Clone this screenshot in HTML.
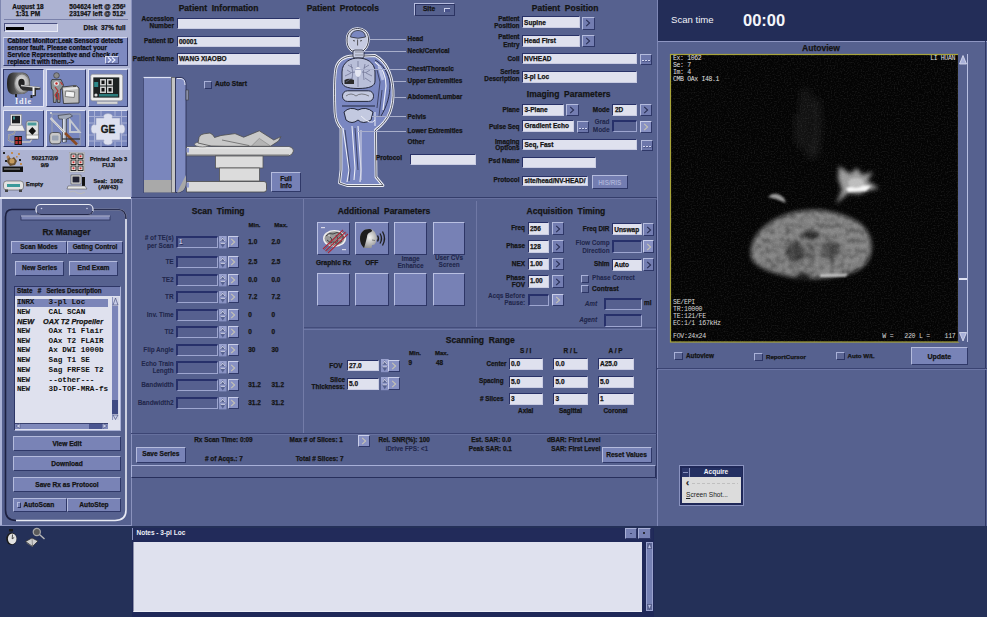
<!DOCTYPE html>
<html><head><meta charset="utf-8">
<style>
*{margin:0;padding:0;box-sizing:border-box}
html,body{width:987px;height:617px;overflow:hidden;background:#243058;font-family:"Liberation Sans",sans-serif;position:relative}
.a{position:absolute}
.t{position:absolute;white-space:nowrap;line-height:1;}
svg{overflow:visible}
</style></head><body>

<div class="a" style="left:0px;top:526px;width:987px;height:91px;background:#243058"></div>
<div class="a" style="left:0px;top:0px;width:131px;height:198px;background:#adb3d2"></div>
<div class="a" style="left:0px;top:0px;width:1px;height:198px;background:#7f87b0"></div>
<div class="a" style="left:0px;top:197px;width:131px;height:2.5px;background:#eef0f8"></div>
<div class="a" style="left:0px;top:199px;width:131px;height:327px;background:#56618f"></div>
<div class="a" style="left:0px;top:199px;width:2px;height:327px;background:#a9b0d4"></div>
<div class="a" style="left:0px;top:524.5px;width:131px;height:1.5px;background:#8d95c0"></div>
<div class="a" style="left:131px;top:0px;width:526px;height:526px;background:#56618f"></div>
<div class="a" style="left:131px;top:0px;width:1px;height:526px;background:#8a92bd"></div>
<div class="a" style="left:656px;top:200px;width:1px;height:278.5px;background:#333c6a"></div>
<div class="a" style="left:657px;top:0px;width:330px;height:526px;background:#56618f"></div>
<div class="a" style="left:657px;top:0px;width:1px;height:526px;background:#7e87b5"></div>
<div class="a" style="left:658px;top:0px;width:329px;height:41px;background:#232d58"></div>
<div class="a" style="left:658px;top:40.5px;width:329px;height:1.0px;background:#8e96c2"></div>
<div class="a" style="left:985px;top:41px;width:1px;height:485px;background:#2f3866"></div>
<div class="a" style="left:657px;top:368px;width:330px;height:1px;background:#3a4372"></div>
<div class="a" style="left:657px;top:369px;width:330px;height:1px;background:#6c76a5"></div>
<div class="t" style="top:4.07px;font-size:6.5px;font-weight:bold;color:#141414;font-family:'Liberation Sans',sans-serif;-webkit-text-stroke:0.25px #141414;left:-122px;width:300px;text-align:center;">August 18</div>
<div class="t" style="top:10.87px;font-size:6.5px;font-weight:bold;color:#141414;font-family:'Liberation Sans',sans-serif;-webkit-text-stroke:0.25px #141414;left:-122px;width:300px;text-align:center;">1:31 PM</div>
<div class="t" style="top:3.67px;font-size:6.5px;font-weight:bold;color:#141414;font-family:'Liberation Sans',sans-serif;-webkit-text-stroke:0.25px #141414;right:861.5px;text-align:right;">504624 left @ 256&#178;</div>
<div class="t" style="top:10.67px;font-size:6.5px;font-weight:bold;color:#141414;font-family:'Liberation Sans',sans-serif;-webkit-text-stroke:0.25px #141414;right:861.5px;text-align:right;">231947 left @ 512&#178;</div>
<div class="a" style="left:4px;top:19.2px;width:124px;height:1.1999999999999993px;background:#7a81aa"></div>
<div class="a" style="left:4px;top:23px;width:54px;height:9px;background:#c8cce4;border-top:1.5px solid #4a5080;border-left:1.5px solid #4a5080;border-bottom:1px solid #e9ebf5;border-right:1px solid #e9ebf5"></div>
<div class="a" style="left:5.5px;top:26.5px;width:18.5px;height:3.0px;background:#000"></div>
<div class="t" style="top:25.07px;font-size:6.5px;font-weight:bold;color:#141414;font-family:'Liberation Sans',sans-serif;-webkit-text-stroke:0.25px #141414;right:861.5px;text-align:right;">Disk&nbsp;&nbsp;37% full</div>
<div class="a" style="left:3px;top:36.5px;width:125px;height:29.5px;background:#7e8ac1;border-top:1px solid #d4d8ec;border-left:1px solid #c0c6e2;border-right:1.5px solid #2e3566;border-bottom:1.5px solid #2e3566"></div>
<div class="t" style="top:38.14px;font-size:6.35px;font-weight:bold;color:#0a0a12;font-family:'Liberation Sans',sans-serif;-webkit-text-stroke:0.25px #141414;left:7.5px;">Cabinet Monitor:Leak Sensor3 detects</div>
<div class="t" style="top:45.24px;font-size:6.35px;font-weight:bold;color:#0a0a12;font-family:'Liberation Sans',sans-serif;-webkit-text-stroke:0.25px #141414;left:7.5px;">sensor fault. Please contact your</div>
<div class="t" style="top:52.34px;font-size:6.35px;font-weight:bold;color:#0a0a12;font-family:'Liberation Sans',sans-serif;-webkit-text-stroke:0.25px #141414;left:7.5px;">Service Representative and check or</div>
<div class="t" style="top:59.44px;font-size:6.35px;font-weight:bold;color:#0a0a12;font-family:'Liberation Sans',sans-serif;-webkit-text-stroke:0.25px #141414;left:7.5px;">replace it with them.-&gt;</div>
<div class="a" style="left:105px;top:56px;width:14px;height:7.799999999999997px;background:#7e8ac1;border:1px solid #d8dcee;border-right-color:#4a5080;border-bottom-color:#4a5080"></div>
<svg class="a" style="left:107px;top:56.5px" width="10" height="6"><path d="M1 0.5 L4 3 L1 5.5 M5 0.5 L8 3 L5 5.5" stroke="#eef0ff" stroke-width="1.1" fill="none"/></svg>
<div class="a" style="left:1px;top:67.5px;width:128.5px;height:82.0px;background:#c2c8e4"></div>
<div class="a" style="left:3px;top:69.4px;width:40.5px;height:37.599999999999994px;background:#7886bd;border-top:1.5px solid #2e3667;border-left:1.5px solid #2e3667;border-right:1px solid #dfe2f2;border-bottom:1px solid #dfe2f2"></div>
<div class="a" style="left:3px;top:109.6px;width:40.5px;height:37.70000000000002px;background:#7886bd;border-top:1px solid #dfe2f2;border-left:1px solid #dfe2f2;border-right:1.5px solid #2e3667;border-bottom:1.5px solid #2e3667"></div>
<div class="a" style="left:46px;top:69.4px;width:39.5px;height:37.599999999999994px;background:#7886bd;border-top:1px solid #dfe2f2;border-left:1px solid #dfe2f2;border-right:1.5px solid #2e3667;border-bottom:1.5px solid #2e3667"></div>
<div class="a" style="left:46px;top:109.6px;width:39.5px;height:37.70000000000002px;background:#7886bd;border-top:1px solid #dfe2f2;border-left:1px solid #dfe2f2;border-right:1.5px solid #2e3667;border-bottom:1.5px solid #2e3667"></div>
<div class="a" style="left:88px;top:69.4px;width:39.5px;height:37.599999999999994px;background:#7886bd;border-top:1px solid #dfe2f2;border-left:1px solid #dfe2f2;border-right:1.5px solid #2e3667;border-bottom:1.5px solid #2e3667"></div>
<div class="a" style="left:88px;top:109.6px;width:39.5px;height:37.70000000000002px;background:#7886bd;border-top:1px solid #dfe2f2;border-left:1px solid #dfe2f2;border-right:1.5px solid #2e3667;border-bottom:1.5px solid #2e3667"></div>
<svg class="a" style="left:3px;top:69.4px" width="41" height="38">
<defs><linearGradient id="gm" x1="0" y1="0" x2="1" y2="0"><stop offset="0" stop-color="#1e1e1e"/><stop offset="0.5" stop-color="#6a6a6a"/><stop offset="1" stop-color="#3a3a3a"/></linearGradient>
<radialGradient id="gr" cx="0.45" cy="0.4" r="0.6"><stop offset="0" stop-color="#f2f2f2"/><stop offset="1" stop-color="#9a9a9a"/></radialGradient></defs>
<path d="M10 3.5 C5 4 4 9 4 14.5 C4 20 5 25 10 25.5 L20 25 C25 24 27 19 27 14.5 C27 9 25 4 20 3.5 Z" fill="url(#gm)"/>
<ellipse cx="19" cy="14.5" rx="8" ry="10.5" fill="#7a7a7a"/>
<ellipse cx="19" cy="14.5" rx="7" ry="9" fill="url(#gr)"/>
<ellipse cx="18.5" cy="14" rx="3.2" ry="4.2" fill="#222"/>
<path d="M17 15.5 L37 18 L37.5 20.5 L33 21 L33 27 L30 27.5 L30 22 L20 21.5 L17 19 Z" fill="#2e2e2e"/>
<path d="M18 15.8 L37 18 L36.5 19.3 L18 17.3 Z" fill="#c8c8c8"/>
<rect x="29.5" y="18" width="2" height="8" fill="#f0f0f0"/>
<rect x="12" y="25" width="2" height="3" fill="#222"/><rect x="27.5" y="26" width="2" height="3" fill="#222"/>
<text x="20.5" y="35.3" font-family="Liberation Serif" font-size="8.2" font-weight="bold" fill="#eceef8" text-anchor="middle" letter-spacing="0.9">Idle</text>
</svg>
<svg class="a" style="left:46px;top:69.4px" width="40" height="38">
<circle cx="10.5" cy="6.5" r="2.8" fill="#8a8a8a" stroke="#333" stroke-width="0.6"/>
<path d="M6 10.5 L15 10.5 L17.5 16 L16 20 L14.5 20 L14 33.5 L11.5 33.5 L11 23 L10 33.5 L7.5 33.5 L7 21 L5.5 20 L5 13 Z" fill="#8f9698" stroke="#2a2a2a" stroke-width="0.7"/>
<ellipse cx="10.5" cy="14.5" rx="2.6" ry="2.2" fill="#e8e8e8"/>
<circle cx="10.5" cy="14.5" r="1.2" fill="#c02828"/>
<path d="M14.5 13 L16.5 16 M9 18 L12 22 L9 26 L11 30 M12.5 24 L13 31" stroke="#c03030" stroke-width="1.1" fill="none"/>
<path d="M16 18 L30 16.5 L33 19 L33 34 L17.5 34.5 Z" fill="#bdbdbd" stroke="#2a2a2a" stroke-width="0.8"/>
<path d="M17 19.5 L31 18 L32 20 L18 21.5 Z" fill="#e6e6e6"/>
<rect x="19.5" y="22.5" width="9" height="5.5" fill="#f4f4f4" stroke="#333" stroke-width="0.5" transform="rotate(6 24 25)"/>
<rect x="27" y="16" width="3" height="2" fill="#555"/>
</svg>
<svg class="a" style="left:88px;top:69.4px" width="40" height="38">
<rect x="2.7" y="5.3" width="32" height="26.5" rx="2" fill="#ececec" stroke="#8a8a8a" stroke-width="0.6"/>
<rect x="5.3" y="8.4" width="26" height="20.2" fill="#1d2222"/>
<g fill="#cfcfcf"><rect x="12" y="10" width="6" height="6.5"/><rect x="19" y="10" width="6" height="6.5"/><rect x="12" y="17.5" width="6" height="6.5"/><rect x="19" y="17.5" width="6" height="6.5"/></g>
<g fill="#111"><rect x="13.5" y="11.5" width="3" height="3.5"/><rect x="20.5" y="11.5" width="3" height="3.5"/><rect x="13.5" y="19" width="3" height="3.5"/><rect x="20.5" y="19" width="3" height="3.5"/></g>
<rect x="6.2" y="13" width="4" height="5" fill="#2f8a8a"/>
<rect x="11" y="25" width="19" height="2.5" fill="#2a7a7a"/>
<circle cx="8" cy="26" r="1.6" fill="#ddd"/>
<rect x="9" y="32.5" width="20.5" height="2.5" fill="#d6d6d6" stroke="#999" stroke-width="0.4"/>
</svg>
<svg class="a" style="left:3.5px;top:108.5px" width="40" height="38">
<rect x="6.6" y="5.4" width="11" height="11" fill="#e6e6e6" stroke="#777" stroke-width="0.5"/>
<rect x="8" y="6.8" width="8" height="7.5" fill="#1a1e22"/>
<rect x="9" y="7.5" width="2" height="3" fill="#3a8a8a"/>
<path d="M5.5 16.3 L18.5 16.3 L21 22 L3 22 Z" fill="#ececec" stroke="#666" stroke-width="0.4"/>
<path d="M11 22 L10 25 L5 26 L4.5 31 L8 33 L12 33" fill="none" stroke="#c8c8c8" stroke-width="1.3"/>
<path d="M11 22 L10 25 L5 26 L4.5 31 L8 33 L12 33" fill="none" stroke="#444" stroke-width="0.4"/>
<path d="M18 33 L26 33 L28 30" fill="none" stroke="#c8c8c8" stroke-width="1.3"/>
<rect x="22.2" y="12" width="12.2" height="18" rx="2" fill="#e0e0e0" stroke="#555" stroke-width="0.6"/>
<rect x="23.5" y="13.5" width="9" height="3" fill="#4a9a9a"/>
<path d="M24.5 22 L28.3 18 L32 22 L28.3 26 Z" fill="#111"/>
<rect x="22.2" y="26" width="12.2" height="4" fill="#f4f4f4" stroke="#555" stroke-width="0.5"/>
<rect x="10.5" y="27" width="7.5" height="9" fill="#151515"/>
<g fill="#b03030"><rect x="11.3" y="28" width="2.5" height="3"/><rect x="14.8" y="28" width="2.5" height="3"/><rect x="11.3" y="32" width="2.5" height="3"/><rect x="14.8" y="32" width="2.5" height="3"/></g>
</svg>
<svg class="a" style="left:46px;top:108.5px" width="40" height="38">
<rect x="6" y="5" width="28" height="31" fill="none" stroke="#9aa0b0" stroke-width="1"/>
<path d="M24 11 L33.5 23 L24 23 Z" fill="none" stroke="#c4c8d0" stroke-width="2"/>
<path d="M12 6.5 L24 5 L26.5 7 L23 9 L20.5 10 L20.5 33 L16.5 33 L16.5 10 L13 10 Z" fill="#a0a8b8" stroke="#333" stroke-width="0.6"/>
<rect x="17" y="10" width="1.6" height="23" fill="#d8dde8"/>
<path d="M4.5 9 L19 24" stroke="#ececec" stroke-width="2"/>
<path d="M4.5 9 L19 24" stroke="#555" stroke-width="0.4"/>
<path d="M19 24 L31 35.5" stroke="#8a4a22" stroke-width="2.6"/>
<path d="M16 30 L34 30" stroke="#333" stroke-width="1.2"/>
<rect x="3.7" y="23.5" width="11.3" height="11.3" rx="3" fill="#c8c8c8" stroke="#333" stroke-width="0.7"/>
<rect x="6" y="26.5" width="6.5" height="5" rx="1" fill="#9aa3b3"/>
<circle cx="5" cy="4" r="1" fill="#ddd"/>
</svg>
<svg class="a" style="left:88px;top:109.6px" width="40" height="38">
<path d="M6.5 1 V37 M33.5 1 V37 M1 6.5 H39 M1 31 H39" stroke="#a8b0d4" stroke-width="1"/>
<path d="M13 1 V6 M27 1 V6 M13 32 V37 M27 32 V37 M1 13 H6 M1 25 H6 M34 13 H39 M34 25 H39" stroke="#a8b0d4" stroke-width="1"/>
<path d="M8 8 H16 Q14 4 20 3.5 Q26 4 24 8 H32 V15 Q36.5 13 37 19 Q36.5 25 32 23 V30 H24 Q26 34.5 20 35 Q14 34.5 16 30 H8 V23 Q3.5 25 3 19 Q3.5 13 8 15 Z" fill="#dde0ef" stroke="#a0a6c2" stroke-width="0.6"/>
<text x="20" y="23.3" font-family="Liberation Sans" font-weight="bold" font-size="10" fill="#1a1a1a" text-anchor="middle" stroke="#1a1a1a" stroke-width="0.3">GE</text>
</svg>
<svg class="a" style="left:2px;top:151px" width="22" height="22">
<rect x="0.5" y="15.5" width="20.5" height="5.5" fill="#111"/>
<rect x="2" y="17" width="16" height="2" fill="#5a5a5a"/>
<path d="M6 4 L9 8 L12 6 L15 10 L13 14 L8 15 L5 11 Z" fill="#6a5030"/>
<circle cx="10" cy="10" r="2.6" fill="#c49a5e"/><circle cx="6" cy="6" r="1.5" fill="#b08050"/>
<g fill="#222"><rect x="1" y="1" width="2" height="2"/><rect x="3" y="9" width="2" height="2"/><rect x="17" y="8" width="2" height="2"/></g>
<g fill="#c08a50"><rect x="9" y="1" width="2" height="2"/><rect x="16" y="2" width="2" height="2"/><rect x="18" y="12" width="2" height="2"/><rect x="14" y="5" width="1.6" height="1.6"/></g>
</svg>
<div class="t" style="top:156.46px;font-size:5.9px;font-weight:bold;color:#141414;font-family:'Liberation Sans',sans-serif;-webkit-text-stroke:0.25px #141414;left:-105.2px;width:300px;text-align:center;">50217/2/9</div>
<div class="t" style="top:162.66px;font-size:5.9px;font-weight:bold;color:#141414;font-family:'Liberation Sans',sans-serif;-webkit-text-stroke:0.25px #141414;left:-105.2px;width:300px;text-align:center;">9/9</div>
<svg class="a" style="left:69px;top:151.5px" width="16" height="20">
<rect x="0.5" y="0.5" width="15" height="19.5" fill="#e4e4e4" stroke="#999" stroke-width="0.5"/>
<g fill="#f4f4f4" stroke="#111" stroke-width="0.9"><rect x="2" y="2" width="5" height="4.5"/><rect x="9" y="2" width="5" height="4.5"/><rect x="2" y="8" width="5" height="4.5"/><rect x="9" y="8" width="5" height="4.5"/><rect x="2" y="14" width="5" height="4.5"/><rect x="9" y="14" width="5" height="4.5"/></g>
<g fill="#c33"><rect x="3.5" y="3.3" width="2" height="2"/><rect x="10.5" y="3.3" width="2" height="2"/><rect x="3.5" y="9.3" width="2" height="2"/><rect x="10.5" y="9.3" width="2" height="2"/><rect x="3.5" y="15.3" width="2" height="2"/><rect x="10.5" y="15.3" width="2" height="2"/></g>
</svg>
<div class="t" style="top:156.60px;font-size:5.6px;font-weight:bold;color:#141414;font-family:'Liberation Sans',sans-serif;-webkit-text-stroke:0.25px #141414;left:-41.400000000000006px;width:300px;text-align:center;">Printed&nbsp;&nbsp;Job 3</div>
<div class="t" style="top:162.66px;font-size:5.9px;font-weight:bold;color:#141414;font-family:'Liberation Sans',sans-serif;-webkit-text-stroke:0.25px #141414;left:-41.400000000000006px;width:300px;text-align:center;">FUJI</div>
<svg class="a" style="left:3px;top:178px" width="21" height="15">
<rect x="0.5" y="3" width="20" height="9" rx="3" fill="#e2e2e2" stroke="#555" stroke-width="0.6"/>
<rect x="4" y="6" width="13" height="3" fill="#3a9a9a"/>
<rect x="2" y="11.5" width="3" height="2.5" fill="#444"/><rect x="16" y="11.5" width="3" height="2.5" fill="#444"/>
</svg>
<div class="t" style="top:182.10px;font-size:5.6px;font-weight:bold;color:#141414;font-family:'Liberation Sans',sans-serif;-webkit-text-stroke:0.25px #141414;left:26px;">Empty</div>
<svg class="a" style="left:67px;top:174px" width="22" height="21">
<rect x="4" y="1" width="10" height="9" fill="#e6e6e6" stroke="#444" stroke-width="0.6"/>
<rect x="5.5" y="2.5" width="7" height="6" fill="#223"/>
<rect x="15" y="3" width="3" height="11" fill="#111"/>
<path d="M1 12 L18 12 L20 15 L0 15 Z" fill="#e6e6e6" stroke="#444" stroke-width="0.5"/>
<path d="M3 18 Q8 16 10 19 Q14 21 18 18" stroke="#bbb" fill="none" stroke-width="1"/>
</svg>
<div class="t" style="top:179.05px;font-size:5.7px;font-weight:bold;color:#141414;font-family:'Liberation Sans',sans-serif;-webkit-text-stroke:0.25px #141414;left:-41.8px;width:300px;text-align:center;">Seal:&nbsp;&nbsp;1062</div>
<div class="t" style="top:184.76px;font-size:5.9px;font-weight:bold;color:#141414;font-family:'Liberation Sans',sans-serif;-webkit-text-stroke:0.25px #141414;left:-41.8px;width:300px;text-align:center;">(AW43)</div>
<svg class="a" style="left:0;top:199px" width="131" height="327">
<path d="M35.5 10.5 L12 10.5 Q5.5 10.5 5.5 18 L5.5 311 Q5.5 321.5 16 321.5" fill="none" stroke="#1c2040" stroke-width="1.6"/>
<path d="M93 10.5 L118 10.5 Q126 10.5 126 20 L126 311 Q126 321.5 115 321.5 L16 321.5" fill="none" stroke="#e8eaf4" stroke-width="1.6"/>
<path d="M93 10.5 L118 10.5 Q126 10.5 126 20" fill="none" stroke="#2a2f50" stroke-width="1.6"/>
<rect x="36" y="5.5" width="57" height="10" rx="4.5" fill="#59628f" stroke="#e8eaf4" stroke-width="1.2"/>
<path d="M37 13.5 Q38 15.5 41 15.5 L88 15.5 Q92 15.5 92.5 12" fill="none" stroke="#23284a" stroke-width="1.2"/>
<circle cx="41.5" cy="9.5" r="0.8" fill="#c9cde6"/><circle cx="87" cy="9.5" r="0.8" fill="#c9cde6"/>
<rect x="21" y="17" width="89" height="4" fill="#7d86b6" stroke="#2a3058" stroke-width="0.8"/>
<path d="M21 17 L110 17" stroke="#c6cbe8" stroke-width="1"/>
</svg>
<div class="t" style="top:227.70px;font-size:8.5px;font-weight:bold;color:#141414;font-family:'Liberation Sans',sans-serif;-webkit-text-stroke:0.25px #141414;left:-83.5px;width:300px;text-align:center;">Rx Manager</div>
<div class="a" style="left:11px;top:241px;width:56px;height:12.5px;background:#7983b6;border-top:1px solid #b4bbdd;border-left:1px solid #b4bbdd;border-right:1px solid #2f3868;border-bottom:1px solid #2f3868;"></div>
<div class="a" style="left:67px;top:241px;width:56px;height:12.5px;background:#7983b6;border-top:1px solid #b4bbdd;border-left:1px solid #b4bbdd;border-right:1px solid #2f3868;border-bottom:1px solid #2f3868;"></div>
<div class="t" style="top:244.42px;font-size:6.4px;font-weight:bold;color:#141414;font-family:'Liberation Sans',sans-serif;-webkit-text-stroke:0.25px #141414;left:-111px;width:300px;text-align:center;">Scan Modes</div>
<div class="t" style="top:244.42px;font-size:6.4px;font-weight:bold;color:#141414;font-family:'Liberation Sans',sans-serif;-webkit-text-stroke:0.25px #141414;left:-55px;width:300px;text-align:center;">Gating Control</div>
<div class="a" style="left:15px;top:261px;width:49px;height:15px;background:#7983b6;border-top:1px solid #b4bbdd;border-left:1px solid #b4bbdd;border-right:1px solid #2f3868;border-bottom:1px solid #2f3868;"></div>
<div class="a" style="left:69px;top:261px;width:49px;height:15px;background:#7983b6;border-top:1px solid #b4bbdd;border-left:1px solid #b4bbdd;border-right:1px solid #2f3868;border-bottom:1px solid #2f3868;"></div>
<div class="t" style="top:265.32px;font-size:6.6px;font-weight:bold;color:#141414;font-family:'Liberation Sans',sans-serif;-webkit-text-stroke:0.25px #141414;left:-110.5px;width:300px;text-align:center;">New Series</div>
<div class="t" style="top:265.32px;font-size:6.6px;font-weight:bold;color:#141414;font-family:'Liberation Sans',sans-serif;-webkit-text-stroke:0.25px #141414;left:-56.5px;width:300px;text-align:center;">End Exam</div>
<div class="a" style="left:13.5px;top:285.5px;width:107.0px;height:10.5px;background:#6f79ad;border-top:1px solid #2e3666;border-left:1px solid #2e3666;border-right:1px solid #aab1d6"></div>
<div class="t" style="top:287.76px;font-size:6.3px;font-weight:bold;color:#141414;font-family:'Liberation Sans',sans-serif;-webkit-text-stroke:0.25px #141414;left:17px;">State&nbsp;&nbsp;&nbsp;#&nbsp;&nbsp;&nbsp;Series Description</div>
<div class="a" style="left:13.5px;top:296px;width:107.0px;height:135px;background:#dfe1ee;border-left:1px solid #2e3666;border-right:1px solid #aab1d6;border-bottom:1px solid #aab1d6"></div>
<div class="a" style="left:17px;top:298.5px;width:91px;height:8.0px;background:#7b85b8"></div>
<div class="t" style="top:298.84px;font-size:7.6px;font-weight:bold;color:#151515;font-family:'Liberation Mono',monospace;left:17px;letter-spacing:-0.3px;">INRX</div>
<div class="t" style="top:298.81px;font-size:7.65px;font-weight:normal;color:#111;font-family:'Liberation Mono',monospace;left:48.6px;font-weight:600;">3-pl Loc</div>
<div class="t" style="top:308.56px;font-size:7.6px;font-weight:bold;color:#151515;font-family:'Liberation Mono',monospace;left:17px;letter-spacing:-0.3px;">NEW</div>
<div class="t" style="top:308.53px;font-size:7.65px;font-weight:normal;color:#111;font-family:'Liberation Mono',monospace;left:48.6px;font-weight:600;">CAL SCAN</div>
<div class="t" style="top:318.42px;font-size:7.3px;font-weight:bold;color:#111;font-family:'Liberation Sans',sans-serif;font-style:italic;-webkit-text-stroke:0.25px #141414;left:17px;">NEW</div>
<div class="t" style="top:318.42px;font-size:7.3px;font-weight:bold;color:#111;font-family:'Liberation Sans',sans-serif;font-style:italic;-webkit-text-stroke:0.25px #141414;left:43px;">OAX T2 Propeller</div>
<div class="t" style="top:328.00px;font-size:7.6px;font-weight:bold;color:#151515;font-family:'Liberation Mono',monospace;left:17px;letter-spacing:-0.3px;">NEW</div>
<div class="t" style="top:327.97px;font-size:7.65px;font-weight:normal;color:#111;font-family:'Liberation Mono',monospace;left:48.6px;font-weight:600;">OAx T1 Flair</div>
<div class="t" style="top:337.72px;font-size:7.6px;font-weight:bold;color:#151515;font-family:'Liberation Mono',monospace;left:17px;letter-spacing:-0.3px;">NEW</div>
<div class="t" style="top:337.69px;font-size:7.65px;font-weight:normal;color:#111;font-family:'Liberation Mono',monospace;left:48.6px;font-weight:600;">OAx T2 FLAIR</div>
<div class="t" style="top:347.44px;font-size:7.6px;font-weight:bold;color:#151515;font-family:'Liberation Mono',monospace;left:17px;letter-spacing:-0.3px;">NEW</div>
<div class="t" style="top:347.41px;font-size:7.65px;font-weight:normal;color:#111;font-family:'Liberation Mono',monospace;left:48.6px;font-weight:600;">Ax DWI 1000b</div>
<div class="t" style="top:357.16px;font-size:7.6px;font-weight:bold;color:#151515;font-family:'Liberation Mono',monospace;left:17px;letter-spacing:-0.3px;">NEW</div>
<div class="t" style="top:357.13px;font-size:7.65px;font-weight:normal;color:#111;font-family:'Liberation Mono',monospace;left:48.6px;font-weight:600;">Sag T1 SE</div>
<div class="t" style="top:366.88px;font-size:7.6px;font-weight:bold;color:#151515;font-family:'Liberation Mono',monospace;left:17px;letter-spacing:-0.3px;">NEW</div>
<div class="t" style="top:366.85px;font-size:7.65px;font-weight:normal;color:#111;font-family:'Liberation Mono',monospace;left:48.6px;font-weight:600;">Sag FRFSE T2</div>
<div class="t" style="top:376.60px;font-size:7.6px;font-weight:bold;color:#151515;font-family:'Liberation Mono',monospace;left:17px;letter-spacing:-0.3px;">NEW</div>
<div class="t" style="top:376.57px;font-size:7.65px;font-weight:normal;color:#111;font-family:'Liberation Mono',monospace;left:48.6px;font-weight:600;">--other---</div>
<div class="t" style="top:386.32px;font-size:7.6px;font-weight:bold;color:#151515;font-family:'Liberation Mono',monospace;left:17px;letter-spacing:-0.3px;">NEW</div>
<div class="t" style="top:386.29px;font-size:7.65px;font-weight:normal;color:#111;font-family:'Liberation Mono',monospace;left:48.6px;font-weight:600;">3D-TOF-MRA-fs</div>
<div class="a" style="left:111.5px;top:297px;width:7.0px;height:123px;background:#d3d6e8;border-left:1px solid #8d95c0"></div>
<div class="a" style="left:112px;top:306px;width:6px;height:94px;background:#7b85b8"></div>
<div class="a" style="left:112px;top:400px;width:6px;height:14px;background:#3f4a82"></div>
<svg class="a" style="left:111.5px;top:297px" width="7" height="9"><path d="M1 8 L3.5 1 L6 8 Z" fill="#c8cde8" stroke="#3a4270" stroke-width="0.6"/></svg>
<svg class="a" style="left:111.5px;top:414px" width="7" height="6"><path d="M1 1 L3.5 5.5 L6 1 Z" fill="#c8cde8" stroke="#3a4270" stroke-width="0.6"/></svg>
<div class="a" style="left:15px;top:422.5px;width:93px;height:6.5px;background:#7f89bb;border-top:1px solid #3a4270"></div>
<div class="a" style="left:89px;top:423.5px;width:13px;height:5.5px;background:#4a5590"></div>
<svg class="a" style="left:15px;top:423px" width="93" height="6"><path d="M5 0.5 L1 3 L5 5.5 Z" fill="#c8cde8" stroke="#3a4270" stroke-width="0.5"/><path d="M88 0.5 L92 3 L88 5.5 Z" fill="#c8cde8" stroke="#3a4270" stroke-width="0.5"/></svg>
<div class="a" style="left:13px;top:436px;width:108px;height:15px;background:#7983b6;border-top:1px solid #b4bbdd;border-left:1px solid #b4bbdd;border-right:1px solid #2f3868;border-bottom:1px solid #2f3868;"></div>
<div class="t" style="top:440.62px;font-size:6.6px;font-weight:bold;color:#141414;font-family:'Liberation Sans',sans-serif;-webkit-text-stroke:0.25px #141414;left:-83px;width:300px;text-align:center;">View Edit</div>
<div class="a" style="left:13px;top:456px;width:108px;height:15px;background:#7983b6;border-top:1px solid #b4bbdd;border-left:1px solid #b4bbdd;border-right:1px solid #2f3868;border-bottom:1px solid #2f3868;"></div>
<div class="t" style="top:460.62px;font-size:6.6px;font-weight:bold;color:#141414;font-family:'Liberation Sans',sans-serif;-webkit-text-stroke:0.25px #141414;left:-83px;width:300px;text-align:center;">Download</div>
<div class="a" style="left:13px;top:477.2px;width:108px;height:15.300000000000011px;background:#7983b6;border-top:1px solid #b4bbdd;border-left:1px solid #b4bbdd;border-right:1px solid #2f3868;border-bottom:1px solid #2f3868;"></div>
<div class="t" style="top:481.97px;font-size:6.6px;font-weight:bold;color:#141414;font-family:'Liberation Sans',sans-serif;-webkit-text-stroke:0.25px #141414;left:-83px;width:300px;text-align:center;">Save Rx as Protocol</div>
<div class="a" style="left:13px;top:497.8px;width:53.5px;height:14.599999999999966px;background:#7983b6;border-top:1px solid #b4bbdd;border-left:1px solid #b4bbdd;border-right:1px solid #2f3868;border-bottom:1px solid #2f3868;"></div>
<div class="a" style="left:67px;top:497.8px;width:54px;height:14.599999999999966px;background:#7983b6;border-top:1px solid #b4bbdd;border-left:1px solid #b4bbdd;border-right:1px solid #2f3868;border-bottom:1px solid #2f3868;"></div>
<div class="a" style="left:16.5px;top:501.5px;width:4.5px;height:6.5px;background:#7983b6;border:1px solid #2c3564;border-top-color:#b4bbdd;border-left-color:#b4bbdd"></div>
<div class="t" style="top:502.12px;font-size:6.6px;font-weight:bold;color:#141414;font-family:'Liberation Sans',sans-serif;-webkit-text-stroke:0.25px #141414;left:23.5px;">AutoScan</div>
<div class="t" style="top:502.12px;font-size:6.6px;font-weight:bold;color:#141414;font-family:'Liberation Sans',sans-serif;-webkit-text-stroke:0.25px #141414;left:-56px;width:300px;text-align:center;">AutoStep</div>
<svg class="a" style="left:5px;top:528px" width="42" height="20">
<rect x="4" y="1" width="4" height="2.5" fill="#1a1a1a"/>
<ellipse cx="6.5" cy="10.8" rx="5.2" ry="6.2" fill="#1a1a1a"/>
<ellipse cx="7.2" cy="10.8" rx="4.3" ry="5.4" fill="#e2e2e2"/>
<path d="M7.2 10.8 L7.5 6.5 M7.2 10.8 L9.2 9.5" stroke="#222" stroke-width="0.8"/>
<path d="M20.5 13.5 L27 10 L33 13 L27.5 18.5 Z" fill="#cfcfcf" stroke="#2a2a2a" stroke-width="0.7"/>
<path d="M21.5 15 L27.5 18.5 L27.5 16.5" fill="none" stroke="#777" stroke-width="0.7"/>
<path d="M27 10 L27.5 18.5" stroke="#555" stroke-width="0.5"/>
<circle cx="31.8" cy="4" r="3.6" fill="#5a5a5a" stroke="#a8a8a8" stroke-width="1.2"/>
<path d="M34.5 6.5 L39.5 11" stroke="#b8b8b8" stroke-width="1.4"/>
</svg>
<div class="t" style="top:3.50px;font-size:8.5px;font-weight:bold;color:#141414;font-family:'Liberation Sans',sans-serif;-webkit-text-stroke:0.25px #141414;left:178.7px;">Patient&nbsp;&nbsp;Information</div>
<div class="t" style="top:15.67px;font-size:6.5px;font-weight:bold;color:#141414;font-family:'Liberation Sans',sans-serif;-webkit-text-stroke:0.25px #141414;right:813px;text-align:right;">Accession</div>
<div class="t" style="top:23.17px;font-size:6.5px;font-weight:bold;color:#141414;font-family:'Liberation Sans',sans-serif;-webkit-text-stroke:0.25px #141414;right:813px;text-align:right;">Number</div>
<div class="a" style="left:176.5px;top:17.5px;width:123.0px;height:11.7px;background:#dfe1ee;border-top:1.5px solid #283167;border-left:1.5px solid #283167;border-right:1px solid #c9cce2;border-bottom:1px solid #c9cce2;"></div>
<div class="t" style="top:38.17px;font-size:6.5px;font-weight:bold;color:#141414;font-family:'Liberation Sans',sans-serif;-webkit-text-stroke:0.25px #141414;right:813px;text-align:right;">Patient ID</div>
<div class="a" style="left:176.5px;top:35.5px;width:123.0px;height:11.700000000000003px;background:#dfe1ee;border-top:1.5px solid #283167;border-left:1.5px solid #283167;border-right:1px solid #c9cce2;border-bottom:1px solid #c9cce2;"></div>
<div class="t" style="top:38.52px;font-size:6.5px;font-weight:bold;color:#141414;font-family:'Liberation Sans',sans-serif;-webkit-text-stroke:0.25px #141414;left:179.0px;">00001</div>
<div class="t" style="top:55.87px;font-size:6.5px;font-weight:bold;color:#141414;font-family:'Liberation Sans',sans-serif;-webkit-text-stroke:0.25px #141414;right:813px;text-align:right;">Patient Name</div>
<div class="a" style="left:176.5px;top:53px;width:123.0px;height:12px;background:#dfe1ee;border-top:1.5px solid #283167;border-left:1.5px solid #283167;border-right:1px solid #c9cce2;border-bottom:1px solid #c9cce2;"></div>
<div class="t" style="top:56.17px;font-size:6.5px;font-weight:bold;color:#141414;font-family:'Liberation Sans',sans-serif;-webkit-text-stroke:0.25px #141414;left:179.0px;">WANG XIAOBO</div>
<div class="a" style="left:203.6px;top:80.5px;width:8.0px;height:8.0px;background:#5c6694;border-top:1px solid #a9b1d8;border-left:1px solid #a9b1d8;border-right:1px solid #2c3564;border-bottom:1px solid #2c3564;"></div>
<div class="t" style="top:81.32px;font-size:6.6px;font-weight:bold;color:#141414;font-family:'Liberation Sans',sans-serif;-webkit-text-stroke:0.25px #141414;left:215px;">Auto Start</div>
<svg class="a" style="left:131px;top:70px" width="175" height="130">
<rect x="12.5" y="7.5" width="28" height="115" fill="#7a86bc" stroke="#3e4670" stroke-width="0.8"/>
<path d="M12.5 7.5 L40.5 7.5" stroke="#dfe3f5" stroke-width="1.2"/>
<rect x="13" y="110" width="27.5" height="12.5" fill="#a9a9a9"/>
<rect x="40.5" y="7.5" width="4" height="115" fill="#c4c4c4" stroke="#555" stroke-width="0.6"/>
<path d="M44.5 7.5 L50 7.5 Q55 8 55 15 L55 112 Q55 121 48 122.5 L44.5 122.5 Z" fill="#7f8bc1" stroke="#2a2f55" stroke-width="0.9"/>
<path d="M46 8.5 L50 8.5 Q54 9 54 15" fill="none" stroke="#e6e8f4" stroke-width="1"/>
<path d="M55 105 L55 112 Q55 121 48 122.5 L46 122.5 Z" fill="#a8a8a8"/>
<rect x="55" y="20" width="2.5" height="10" fill="#8a8fa8" stroke="#333" stroke-width="0.5"/>
<path d="M55.5 76.8 L159 76.8 Q162.5 78 162.5 81 Q161.5 85 158 85.8 L55.5 85.8 Z" fill="#d9d9d9" stroke="#4a4a4a" stroke-width="0.8"/>
<path d="M56 77.8 L158.5 77.8" stroke="#f4f4f4" stroke-width="1"/>
<path d="M56 84.5 L158 84.5" stroke="#a8a8a8" stroke-width="1"/>
<rect x="55.5" y="78" width="2.5" height="4.5" fill="#8f9ad0"/>
<rect x="84.5" y="86" width="47.5" height="12" fill="#dcdcdc" stroke="#555" stroke-width="0.8"/>
<rect x="88.5" y="98" width="40" height="13" fill="#dcdcdc" stroke="#555" stroke-width="0.8"/>
<path d="M55.5 111.5 L133 111.5 Q135.5 111.5 135.5 114 L135.5 119.5 Q135.5 122 133 122 L55.5 122 Z" fill="#d9d9d9" stroke="#4a4a4a" stroke-width="0.8"/>
<rect x="55.5" y="112.5" width="2.5" height="5" fill="#8f9ad0"/>
<ellipse cx="71.5" cy="74.3" rx="8" ry="2.6" fill="#cfcfcf" stroke="#555" stroke-width="0.6"/>
<path d="M67 73 L68 67.5 Q69 64.2 73 63.8 L79 63 L82 65 L83.5 67.5 L90 65.5 L104 63.6 L112.7 67.2 L128.3 60.8 L142.8 70 L150 66.6 L147.5 71 L139.5 76.3 L96 76.3 L80 76 Z" fill="#c8c8c8" stroke="#4d4d4d" stroke-width="0.8"/>
<path d="M120.5 76 L128.3 68.4 L139.5 76 Z" fill="#b4b4b4" stroke="#666" stroke-width="0.4"/>
<path d="M91 70 L118.3 75.6" stroke="#444" stroke-width="0.6"/>
</svg>
<div class="a" style="left:271px;top:172px;width:30px;height:20px;background:#7681b6;border-top:1px solid #b4bbdd;border-left:1px solid #b4bbdd;border-right:1px solid #2f3868;border-bottom:1px solid #2f3868;"></div>
<div class="t" style="top:176.22px;font-size:6.4px;font-weight:bold;color:#141414;font-family:'Liberation Sans',sans-serif;-webkit-text-stroke:0.25px #141414;left:136px;width:300px;text-align:center;">Full</div>
<div class="t" style="top:182.92px;font-size:6.4px;font-weight:bold;color:#141414;font-family:'Liberation Sans',sans-serif;-webkit-text-stroke:0.25px #141414;left:136px;width:300px;text-align:center;">Info</div>
<div class="t" style="top:3.50px;font-size:8.5px;font-weight:bold;color:#141414;font-family:'Liberation Sans',sans-serif;-webkit-text-stroke:0.25px #141414;left:306.7px;">Patient&nbsp;&nbsp;Protocols</div>
<div class="a" style="left:414.2px;top:3px;width:40.400000000000034px;height:12.6px;background:#56618f;border-top:1px solid #b6bde0;border-left:1px solid #b6bde0;border-right:1px solid #2c3462;border-bottom:1px solid #2c3462;box-shadow:inset 1px 1px 0 #2e3666"></div>
<div class="t" style="top:6.22px;font-size:6.6px;font-weight:bold;color:#141414;font-family:'Liberation Sans',sans-serif;-webkit-text-stroke:0.25px #141414;left:279px;width:300px;text-align:center;">Site</div>
<div class="a" style="left:444px;top:7.5px;width:6px;height:4.0px;background:#48528a;border-top:1px solid #c9cee9;border-left:1px solid #c9cee9"></div>
<svg class="a" style="left:325px;top:20px" width="85" height="170">
<g stroke-linejoin="round" fill="none">
<path d="M28 36 C20 36 13 40 11 48 C9 58 9.5 80 10 92 C10.5 100 13 105 16 108 L16 150 L14.5 163 L22 165.5 L58 165.5 L51 157 L50.5 110 C56 106 62 100 65 92 C67.5 85 68.5 78 68 70 C67 55 62 42 50 35.5 L39 36 Z" fill="#7a87c1" stroke="#eceef6" stroke-width="2.8"/>
<path d="M28 36 C20 36 13 40 11 48 C9 58 9.5 80 10 92 C10.5 100 13 105 16 108 L16 150 L14.5 163 L22 165.5 L58 165.5 L51 157 L50.5 110 C56 106 62 100 65 92 C67.5 85 68.5 78 68 70 C67 55 62 42 50 35.5 L39 36 Z" stroke="#15182a" stroke-width="0.7"/>
<path d="M50 40 C58 44 64 54 65 64 C65 76 62 86 56 96" stroke="#15182a" stroke-width="0.8"/>
<path d="M50 42 C57 47 61 56 61 66 L58 90" stroke="#eceef6" stroke-width="1.2"/>
<path d="M52 50 L55 62 L52 88 M57 70 L54 96" stroke="#15182a" stroke-width="0.6"/>
<path d="M54 46 L58 60" stroke="#b9c1e4" stroke-width="3"/>
<path d="M22 20 C22 12 27 8.5 32.6 8.5 C38 8.5 43.5 12 43.5 19 C43.5 24 42 27 40 29 L38 31 L27 31 L25 29 C23 27 22 24 22 20 Z" fill="#c6cbe1" stroke="#eceef6" stroke-width="2.4"/>
<path d="M22 20 C22 12 27 8.5 32.6 8.5 C38 8.5 43.5 12 43.5 19 C43.5 24 42 27 40 29 L38 31 L27 31 L25 29 C23 27 22 24 22 20 Z" fill="none" stroke="#15182a" stroke-width="0.8"/>
<path d="M25.5 17 C26 12.5 29.5 10.5 33 10.5 C37 10.5 40 12.5 40.5 17 Q33 19.5 25.5 17 Z" fill="#7a87c0" stroke="#222" stroke-width="0.7"/>
<path d="M32.6 19.5 L32.6 25.5 M28 20.5 L30 21 M35 21 L37 20.5" stroke="#333" stroke-width="0.8"/>
<rect x="28" y="30" width="11" height="8" rx="2" fill="#c6cbe1" stroke="#15182a" stroke-width="0.7"/>
<path d="M30 32 L38 32 M30 35 L38 35" stroke="#555" stroke-width="0.5"/>
<path d="M17 61 L17 52 C17 42 26 38 33 38 C41 38 50 42 50 52 L50 61 C50 66 45 68.5 33 68.5 C21 68.5 17 66 17 61 Z" fill="#b9bfd9" stroke="#15182a" stroke-width="0.9"/>
<path d="M19.5 60 Q24 57.5 29 60 L29 64 L19.5 64 Z" fill="#2b2b2b"/>
<path d="M26 44 Q29 52 27 60 M40 44 Q37 52 39 60 M33 41 L33 67 M22 50 Q26 54 30 52 M37 52 Q41 54 45 50 M20 56 L26 53 M47 56 L41 53 M23 45 L28 48 M44 45 L39 48 M21 62 L27 58 M46 62 L40 58" stroke="#6c7090" stroke-width="0.7"/>
<ellipse cx="33" cy="52" rx="3" ry="5" fill="#e4e6f2"/>
<rect x="17.5" y="70.8" width="31" height="10.6" rx="5" fill="#c3c9e0" stroke="#15182a" stroke-width="0.9"/>
<path d="M21 76 Q26 72 31 76 Q36 72 44 76" stroke="#444" stroke-width="0.6"/>
<path d="M17 86 L50 86" stroke="#15182a" stroke-width="0.9"/>
<path d="M19 92 Q25 86 33 90 Q41 86 48 92 L46 100 Q38 105 33 100 Q27 105 21 100 Z" fill="#c3c9e0" stroke="#15182a" stroke-width="0.9"/>
<path d="M36 96 Q46 106 50 100 M50 92 L50 106" stroke="#eceef6" stroke-width="1"/>
<path d="M18 108 L24 150 L22 162 M27 106 L30 148 L29 160 M33 106 L36 150 L35 162" stroke="#eceef6" stroke-width="1.1"/>
<path d="M20 110 L25 150 L24 161 M30 108 L33 150" stroke="#15182a" stroke-width="0.6"/>
<path d="M36 110 L36 160" stroke="#c8cce0" stroke-width="1.2"/>
</g>
</svg>
<div class="a" style="left:369px;top:38.6px;width:37px;height:1.0px;background:#a8aecb"></div>
<div class="t" style="top:36.02px;font-size:6.4px;font-weight:bold;color:#141414;font-family:'Liberation Sans',sans-serif;-webkit-text-stroke:0.25px #141414;left:407.6px;">Head</div>
<div class="a" style="left:363px;top:50.8px;width:43px;height:1.0px;background:#a8aecb"></div>
<div class="t" style="top:48.22px;font-size:6.4px;font-weight:bold;color:#141414;font-family:'Liberation Sans',sans-serif;-webkit-text-stroke:0.25px #141414;left:407.6px;">Neck/Cervical</div>
<div class="a" style="left:355px;top:68.7px;width:51px;height:1.0px;background:#a8aecb"></div>
<div class="t" style="top:66.12px;font-size:6.4px;font-weight:bold;color:#141414;font-family:'Liberation Sans',sans-serif;-webkit-text-stroke:0.25px #141414;left:407.6px;">Chest/Thoracic</div>
<div class="a" style="left:393px;top:80.9px;width:13px;height:1.0px;background:#a8aecb"></div>
<div class="t" style="top:78.32px;font-size:6.4px;font-weight:bold;color:#141414;font-family:'Liberation Sans',sans-serif;-webkit-text-stroke:0.25px #141414;left:407.6px;">Upper Extremities</div>
<div class="a" style="left:394px;top:96.9px;width:12px;height:1.0px;background:#a8aecb"></div>
<div class="t" style="top:94.32px;font-size:6.4px;font-weight:bold;color:#141414;font-family:'Liberation Sans',sans-serif;-webkit-text-stroke:0.25px #141414;left:407.6px;">Abdomen/Lumbar</div>
<div class="a" style="left:372px;top:116.2px;width:34px;height:1.0px;background:#a8aecb"></div>
<div class="t" style="top:113.62px;font-size:6.4px;font-weight:bold;color:#141414;font-family:'Liberation Sans',sans-serif;-webkit-text-stroke:0.25px #141414;left:407.6px;">Pelvis</div>
<div class="a" style="left:357px;top:130.7px;width:49px;height:1.0px;background:#a8aecb"></div>
<div class="t" style="top:128.12px;font-size:6.4px;font-weight:bold;color:#141414;font-family:'Liberation Sans',sans-serif;-webkit-text-stroke:0.25px #141414;left:407.6px;">Lower Extremities</div>
<div class="t" style="top:138.92px;font-size:6.4px;font-weight:bold;color:#141414;font-family:'Liberation Sans',sans-serif;-webkit-text-stroke:0.25px #141414;left:407.6px;">Other</div>
<div class="t" style="top:154.72px;font-size:6.4px;font-weight:bold;color:#141414;font-family:'Liberation Sans',sans-serif;-webkit-text-stroke:0.25px #141414;right:585px;text-align:right;">Protocol</div>
<div class="a" style="left:409.6px;top:153.5px;width:66.09999999999997px;height:11.0px;background:#dfe1ee;border-top:1.5px solid #283167;border-left:1.5px solid #283167;border-right:1px solid #c9cce2;border-bottom:1px solid #c9cce2;"></div>
<div class="t" style="top:3.50px;font-size:8.5px;font-weight:bold;color:#141414;font-family:'Liberation Sans',sans-serif;-webkit-text-stroke:0.25px #141414;left:531.8px;">Patient&nbsp;&nbsp;Position</div>
<div class="t" style="top:16.42px;font-size:6.4px;font-weight:bold;color:#141414;font-family:'Liberation Sans',sans-serif;-webkit-text-stroke:0.25px #141414;right:467.5px;text-align:right;">Patient</div>
<div class="t" style="top:23.42px;font-size:6.4px;font-weight:bold;color:#141414;font-family:'Liberation Sans',sans-serif;-webkit-text-stroke:0.25px #141414;right:467.5px;text-align:right;">Position</div>
<div class="a" style="left:521.6px;top:16.4px;width:58.39999999999998px;height:12.100000000000001px;background:#dfe1ee;border-top:1.5px solid #283167;border-left:1.5px solid #283167;border-right:1px solid #c9cce2;border-bottom:1px solid #c9cce2;"></div>
<div class="t" style="top:19.62px;font-size:6.5px;font-weight:bold;color:#141414;font-family:'Liberation Sans',sans-serif;-webkit-text-stroke:0.25px #141414;left:524.1px;">Supine</div>
<div class="a" style="left:582.2px;top:17px;width:12.5px;height:12.5px;background:#737db1;border-top:1px solid #b4bbdd;border-left:1px solid #b4bbdd;border-right:1px solid #2f3868;border-bottom:1px solid #2f3868;"></div>
<svg class="a" style="left:585.45px;top:19.25px" width="6" height="8"><path d="M1.2 0.8 L4.6 4 L1.2 7.2" fill="none" stroke="#2a3055" stroke-width="1.1"/></svg>
<div class="t" style="top:34.42px;font-size:6.4px;font-weight:bold;color:#141414;font-family:'Liberation Sans',sans-serif;-webkit-text-stroke:0.25px #141414;right:467.5px;text-align:right;">Patient</div>
<div class="t" style="top:41.92px;font-size:6.4px;font-weight:bold;color:#141414;font-family:'Liberation Sans',sans-serif;-webkit-text-stroke:0.25px #141414;right:467.5px;text-align:right;">Entry</div>
<div class="a" style="left:521.6px;top:35px;width:58.39999999999998px;height:12px;background:#dfe1ee;border-top:1.5px solid #283167;border-left:1.5px solid #283167;border-right:1px solid #c9cce2;border-bottom:1px solid #c9cce2;"></div>
<div class="t" style="top:38.17px;font-size:6.5px;font-weight:bold;color:#141414;font-family:'Liberation Sans',sans-serif;-webkit-text-stroke:0.25px #141414;left:524.1px;">Head First</div>
<div class="a" style="left:582.2px;top:35.3px;width:12.5px;height:12.200000000000003px;background:#737db1;border-top:1px solid #b4bbdd;border-left:1px solid #b4bbdd;border-right:1px solid #2f3868;border-bottom:1px solid #2f3868;"></div>
<svg class="a" style="left:585.45px;top:37.4px" width="6" height="8"><path d="M1.2 0.8 L4.6 4 L1.2 7.2" fill="none" stroke="#2a3055" stroke-width="1.1"/></svg>
<div class="t" style="top:55.62px;font-size:6.4px;font-weight:bold;color:#141414;font-family:'Liberation Sans',sans-serif;-webkit-text-stroke:0.25px #141414;right:467.5px;text-align:right;">Coil</div>
<div class="a" style="left:521.6px;top:53px;width:115.39999999999998px;height:11.299999999999997px;background:#dfe1ee;border-top:1.5px solid #283167;border-left:1.5px solid #283167;border-right:1px solid #c9cce2;border-bottom:1px solid #c9cce2;"></div>
<div class="t" style="top:55.82px;font-size:6.5px;font-weight:bold;color:#141414;font-family:'Liberation Sans',sans-serif;-webkit-text-stroke:0.25px #141414;left:524.1px;">NVHEAD</div>
<div class="a" style="left:639.5px;top:53.5px;width:12.5px;height:11.5px;background:#6d77ab;border-top:1px solid #b4bbdd;border-left:1px solid #b4bbdd;border-right:1px solid #2f3868;border-bottom:1px solid #2f3868;"></div>
<div class="a" style="left:641.95px;top:59.85px;width:1.599999999999909px;height:1.3999999999999986px;background:#d0d4ee;box-shadow:0.5px 0.5px 0 #2a3060"></div>
<div class="a" style="left:644.95px;top:59.85px;width:1.599999999999909px;height:1.3999999999999986px;background:#d0d4ee;box-shadow:0.5px 0.5px 0 #2a3060"></div>
<div class="a" style="left:647.95px;top:59.85px;width:1.599999999999909px;height:1.3999999999999986px;background:#d0d4ee;box-shadow:0.5px 0.5px 0 #2a3060"></div>
<div class="t" style="top:68.92px;font-size:6.4px;font-weight:bold;color:#141414;font-family:'Liberation Sans',sans-serif;-webkit-text-stroke:0.25px #141414;right:467.5px;text-align:right;">Series</div>
<div class="t" style="top:76.22px;font-size:6.4px;font-weight:bold;color:#141414;font-family:'Liberation Sans',sans-serif;-webkit-text-stroke:0.25px #141414;right:467.5px;text-align:right;">Description</div>
<div class="a" style="left:521.6px;top:70.5px;width:115.39999999999998px;height:12.0px;background:#dfe1ee;border-top:1.5px solid #283167;border-left:1.5px solid #283167;border-right:1px solid #c9cce2;border-bottom:1px solid #c9cce2;"></div>
<div class="t" style="top:73.67px;font-size:6.5px;font-weight:bold;color:#141414;font-family:'Liberation Sans',sans-serif;-webkit-text-stroke:0.25px #141414;left:524.1px;">3-pl Loc</div>
<div class="t" style="top:89.70px;font-size:8.5px;font-weight:bold;color:#141414;font-family:'Liberation Sans',sans-serif;-webkit-text-stroke:0.25px #141414;left:526.8px;">Imaging&nbsp;&nbsp;Parameters</div>
<div class="t" style="top:107.12px;font-size:6.4px;font-weight:bold;color:#141414;font-family:'Liberation Sans',sans-serif;-webkit-text-stroke:0.25px #141414;right:467.5px;text-align:right;">Plane</div>
<div class="a" style="left:522px;top:103.7px;width:42.299999999999955px;height:11.899999999999991px;background:#dfe1ee;border-top:1.5px solid #283167;border-left:1.5px solid #283167;border-right:1px solid #c9cce2;border-bottom:1px solid #c9cce2;"></div>
<div class="t" style="top:106.82px;font-size:6.5px;font-weight:bold;color:#141414;font-family:'Liberation Sans',sans-serif;-webkit-text-stroke:0.25px #141414;left:524.5px;">3-Plane</div>
<div class="a" style="left:566px;top:104px;width:12.600000000000023px;height:12px;background:#737db1;border-top:1px solid #b4bbdd;border-left:1px solid #b4bbdd;border-right:1px solid #2f3868;border-bottom:1px solid #2f3868;"></div>
<svg class="a" style="left:569.3px;top:106.0px" width="6" height="8"><path d="M1.2 0.8 L4.6 4 L1.2 7.2" fill="none" stroke="#2a3055" stroke-width="1.1"/></svg>
<div class="t" style="top:107.12px;font-size:6.4px;font-weight:bold;color:#141414;font-family:'Liberation Sans',sans-serif;-webkit-text-stroke:0.25px #141414;right:377.5px;text-align:right;">Mode</div>
<div class="a" style="left:612.4px;top:103.7px;width:24.600000000000023px;height:11.899999999999991px;background:#dfe1ee;border-top:1.5px solid #283167;border-left:1.5px solid #283167;border-right:1px solid #c9cce2;border-bottom:1px solid #c9cce2;"></div>
<div class="t" style="top:106.82px;font-size:6.5px;font-weight:bold;color:#141414;font-family:'Liberation Sans',sans-serif;-webkit-text-stroke:0.25px #141414;left:614.9px;">2D</div>
<div class="a" style="left:640px;top:104px;width:12px;height:12px;background:#737db1;border-top:1px solid #b4bbdd;border-left:1px solid #b4bbdd;border-right:1px solid #2f3868;border-bottom:1px solid #2f3868;"></div>
<svg class="a" style="left:643.0px;top:106.0px" width="6" height="8"><path d="M1.2 0.8 L4.6 4 L1.2 7.2" fill="none" stroke="#2a3055" stroke-width="1.1"/></svg>
<div class="t" style="top:123.52px;font-size:6.4px;font-weight:bold;color:#141414;font-family:'Liberation Sans',sans-serif;-webkit-text-stroke:0.25px #141414;right:467.5px;text-align:right;">Pulse Seq</div>
<div class="a" style="left:522px;top:120.4px;width:52.39999999999998px;height:11.699999999999989px;background:#dfe1ee;border-top:1.5px solid #283167;border-left:1.5px solid #283167;border-right:1px solid #c9cce2;border-bottom:1px solid #c9cce2;"></div>
<div class="t" style="top:123.42px;font-size:6.5px;font-weight:bold;color:#141414;font-family:'Liberation Sans',sans-serif;-webkit-text-stroke:0.25px #141414;left:524.5px;">Gradient Echo</div>
<div class="a" style="left:577px;top:121px;width:12px;height:12px;background:#6d77ab;border-top:1px solid #b4bbdd;border-left:1px solid #b4bbdd;border-right:1px solid #2f3868;border-bottom:1px solid #2f3868;"></div>
<div class="a" style="left:579.2px;top:127.6px;width:1.599999999999909px;height:1.4000000000000057px;background:#d0d4ee;box-shadow:0.5px 0.5px 0 #2a3060"></div>
<div class="a" style="left:582.2px;top:127.6px;width:1.599999999999909px;height:1.4000000000000057px;background:#d0d4ee;box-shadow:0.5px 0.5px 0 #2a3060"></div>
<div class="a" style="left:585.2px;top:127.6px;width:1.599999999999909px;height:1.4000000000000057px;background:#d0d4ee;box-shadow:0.5px 0.5px 0 #2a3060"></div>
<div class="t" style="top:119.42px;font-size:6.4px;font-weight:bold;color:#20264c;font-family:'Liberation Sans',sans-serif;right:377.5px;text-align:right;text-shadow:-0.5px -0.5px 0 rgba(190,196,225,0.25);-webkit-text-stroke:0.2px #20264c">Grad</div>
<div class="t" style="top:127.12px;font-size:6.4px;font-weight:bold;color:#20264c;font-family:'Liberation Sans',sans-serif;right:377.5px;text-align:right;text-shadow:-0.5px -0.5px 0 rgba(190,196,225,0.25);-webkit-text-stroke:0.2px #20264c">Mode</div>
<div class="a" style="left:612.4px;top:120.4px;width:24.600000000000023px;height:11.699999999999989px;background:#56608f;border-top:2px solid #27306a;border-left:2px solid #27306a;border-right:1px solid #9ea6d0;border-bottom:1px solid #9ea6d0;"></div>
<div class="a" style="left:640px;top:120.5px;width:12px;height:12.0px;background:#8891c3;border-top:1px solid #c9cee9;border-left:1px solid #c9cee9;border-right:1px solid #2f3868;border-bottom:1px solid #2f3868;"></div>
<svg class="a" style="left:643.0px;top:122.5px" width="6" height="8"><path d="M1.2 0.8 L4.6 4 L1.2 7.2" fill="none" stroke="#c4c2b4" stroke-width="1.1"/></svg>
<div class="t" style="top:138.72px;font-size:6.4px;font-weight:bold;color:#141414;font-family:'Liberation Sans',sans-serif;-webkit-text-stroke:0.25px #141414;right:467.5px;text-align:right;">Imaging</div>
<div class="t" style="top:145.42px;font-size:6.4px;font-weight:bold;color:#141414;font-family:'Liberation Sans',sans-serif;-webkit-text-stroke:0.25px #141414;right:467.5px;text-align:right;">Options</div>
<div class="a" style="left:522px;top:139.3px;width:115px;height:10.699999999999989px;background:#dfe1ee;border-top:1.5px solid #283167;border-left:1.5px solid #283167;border-right:1px solid #c9cce2;border-bottom:1px solid #c9cce2;"></div>
<div class="t" style="top:141.82px;font-size:6.5px;font-weight:bold;color:#141414;font-family:'Liberation Sans',sans-serif;-webkit-text-stroke:0.25px #141414;left:524.5px;">Seq, Fast</div>
<div class="a" style="left:641px;top:139.5px;width:11.5px;height:11.5px;background:#6d77ab;border-top:1px solid #b4bbdd;border-left:1px solid #b4bbdd;border-right:1px solid #2f3868;border-bottom:1px solid #2f3868;"></div>
<div class="a" style="left:642.95px;top:145.85px;width:1.599999999999909px;height:1.4000000000000057px;background:#d0d4ee;box-shadow:0.5px 0.5px 0 #2a3060"></div>
<div class="a" style="left:645.95px;top:145.85px;width:1.599999999999909px;height:1.4000000000000057px;background:#d0d4ee;box-shadow:0.5px 0.5px 0 #2a3060"></div>
<div class="a" style="left:648.95px;top:145.85px;width:1.599999999999909px;height:1.4000000000000057px;background:#d0d4ee;box-shadow:0.5px 0.5px 0 #2a3060"></div>
<div class="t" style="top:158.42px;font-size:6.4px;font-weight:bold;color:#141414;font-family:'Liberation Sans',sans-serif;-webkit-text-stroke:0.25px #141414;right:467.5px;text-align:right;">Psd Name</div>
<div class="a" style="left:522px;top:157.4px;width:73.79999999999995px;height:10.5px;background:#dfe1ee;border-top:1.5px solid #283167;border-left:1.5px solid #283167;border-right:1px solid #c9cce2;border-bottom:1px solid #c9cce2;"></div>
<div class="t" style="top:177.42px;font-size:6.4px;font-weight:bold;color:#141414;font-family:'Liberation Sans',sans-serif;-webkit-text-stroke:0.25px #141414;right:467.5px;text-align:right;">Protocol</div>
<div class="a" style="left:522px;top:175.7px;width:66px;height:10.800000000000011px;background:#dfe1ee;border-top:1.5px solid #283167;border-left:1.5px solid #283167;border-right:1px solid #c9cce2;border-bottom:1px solid #c9cce2;"></div>
<div class="t" style="top:178.27px;font-size:6.5px;font-weight:bold;color:#141414;font-family:'Liberation Sans',sans-serif;-webkit-text-stroke:0.25px #141414;left:524.5px;">site/head/NV-HEAD/</div>
<div class="a" style="left:592px;top:175.3px;width:35.5px;height:14.0px;background:#737db1;border-top:1px solid #b4bbdd;border-left:1px solid #b4bbdd;border-right:1px solid #2f3868;border-bottom:1px solid #2f3868;"></div>
<div class="t" style="top:179.52px;font-size:6.4px;font-weight:bold;color:#a9b0d6;font-family:'Liberation Sans',sans-serif;left:459.79999999999995px;width:300px;text-align:center;">HIS/RIS</div>
<div class="a" style="left:131px;top:196.5px;width:526px;height:1.0px;background:#343d6b"></div>
<div class="a" style="left:132px;top:197.5px;width:524px;height:1.0px;background:#67709f"></div>
<div class="a" style="left:302.7px;top:198.5px;width:1.1999999999999886px;height:234.5px;background:#737ca8"></div>
<div class="a" style="left:476px;top:201px;width:1.3000000000000114px;height:125.5px;background:#6f78a5"></div>
<div class="a" style="left:304px;top:327.3px;width:352px;height:1.1999999999999886px;background:#434c7b"></div>
<div class="a" style="left:304px;top:328.5px;width:352px;height:1.0px;background:#6d77a6"></div>
<div class="t" style="top:206.90px;font-size:8.5px;font-weight:bold;color:#141414;font-family:'Liberation Sans',sans-serif;-webkit-text-stroke:0.25px #141414;left:191.8px;">Scan&nbsp;&nbsp;Timing</div>
<div class="t" style="top:221.61px;font-size:6px;font-weight:bold;color:#141414;font-family:'Liberation Sans',sans-serif;-webkit-text-stroke:0.25px #141414;left:104.5px;width:300px;text-align:center;">Min.</div>
<div class="t" style="top:221.61px;font-size:6px;font-weight:bold;color:#141414;font-family:'Liberation Sans',sans-serif;-webkit-text-stroke:0.25px #141414;left:131px;width:300px;text-align:center;">Max.</div>
<div class="t" style="top:235.26px;font-size:6.3px;font-weight:bold;color:#20264c;font-family:'Liberation Sans',sans-serif;right:813.5px;text-align:right;text-shadow:-0.5px -0.5px 0 rgba(190,196,225,0.25);-webkit-text-stroke:0.2px #20264c"># of TE(s)</div>
<div class="t" style="top:242.56px;font-size:6.3px;font-weight:bold;color:#20264c;font-family:'Liberation Sans',sans-serif;right:813.5px;text-align:right;text-shadow:-0.5px -0.5px 0 rgba(190,196,225,0.25);-webkit-text-stroke:0.2px #20264c">per Scan</div>
<div class="a" style="left:176.4px;top:235.60000000000002px;width:41.29999999999998px;height:12.399999999999977px;background:#56608f;border-top:2px solid #27306a;border-left:2px solid #27306a;border-right:1px solid #9ea6d0;border-bottom:1px solid #9ea6d0;"></div>
<div class="t" style="top:239.06px;font-size:6.3px;font-weight:bold;color:#c0c5e2;font-family:'Liberation Sans',sans-serif;left:179px;text-shadow:0.7px 0.7px 0 #262d5e">1</div>
<svg class="a" style="left:219.3px;top:235.60000000000002px" width="8" height="12.399999999999977"><rect x="0" y="0" width="7.5" height="12.399999999999977" fill="#8a93c4"/><rect x="0" y="0" width="7.5" height="6.199999999999989" fill="#9aa2cf"/><path d="M0.8 5.399999999999989 L3.75 1 L6.7 5.399999999999989 Z" fill="#56618f"/><path d="M1.5 4.9999999999999885 L3.75 2.2 L6 4.9999999999999885" fill="none" stroke="#e8eaf6" stroke-width="0.8"/><path d="M0.8 6.9999999999999885 L3.75 11.399999999999977 L6.7 6.9999999999999885 Z" fill="#56618f"/><path d="M1.5 7.399999999999989 L6 7.399999999999989" fill="none" stroke="#e8eaf6" stroke-width="0.8"/></svg>
<div class="a" style="left:227.5px;top:235.60000000000002px;width:11.5px;height:12.399999999999977px;background:#8891c3;border-top:1px solid #c9cee9;border-left:1px solid #c9cee9;border-right:1px solid #2f3868;border-bottom:1px solid #2f3868;"></div>
<svg class="a" style="left:230.25px;top:237.8px" width="6" height="8"><path d="M1.2 0.8 L4.6 4 L1.2 7.2" fill="none" stroke="#c4c2b4" stroke-width="1.1"/></svg>
<div class="t" style="top:238.72px;font-size:6.4px;font-weight:bold;color:#141414;font-family:'Liberation Sans',sans-serif;-webkit-text-stroke:0.25px #141414;left:248.3px;">1.0</div>
<div class="t" style="top:238.72px;font-size:6.4px;font-weight:bold;color:#141414;font-family:'Liberation Sans',sans-serif;-webkit-text-stroke:0.25px #141414;left:271.5px;">2.0</div>
<div class="t" style="top:258.96px;font-size:6.3px;font-weight:bold;color:#20264c;font-family:'Liberation Sans',sans-serif;right:813.5px;text-align:right;text-shadow:-0.5px -0.5px 0 rgba(190,196,225,0.25);-webkit-text-stroke:0.2px #20264c">TE</div>
<div class="a" style="left:176.4px;top:255.8px;width:41.29999999999998px;height:12.399999999999977px;background:#56608f;border-top:2px solid #27306a;border-left:2px solid #27306a;border-right:1px solid #9ea6d0;border-bottom:1px solid #9ea6d0;"></div>
<svg class="a" style="left:219.3px;top:255.8px" width="8" height="12.399999999999977"><rect x="0" y="0" width="7.5" height="12.399999999999977" fill="#8a93c4"/><rect x="0" y="0" width="7.5" height="6.199999999999989" fill="#9aa2cf"/><path d="M0.8 5.399999999999989 L3.75 1 L6.7 5.399999999999989 Z" fill="#56618f"/><path d="M1.5 4.9999999999999885 L3.75 2.2 L6 4.9999999999999885" fill="none" stroke="#e8eaf6" stroke-width="0.8"/><path d="M0.8 6.9999999999999885 L3.75 11.399999999999977 L6.7 6.9999999999999885 Z" fill="#56618f"/><path d="M1.5 7.399999999999989 L6 7.399999999999989" fill="none" stroke="#e8eaf6" stroke-width="0.8"/></svg>
<div class="a" style="left:227.5px;top:255.8px;width:11.5px;height:12.399999999999977px;background:#8891c3;border-top:1px solid #c9cee9;border-left:1px solid #c9cee9;border-right:1px solid #2f3868;border-bottom:1px solid #2f3868;"></div>
<svg class="a" style="left:230.25px;top:258.0px" width="6" height="8"><path d="M1.2 0.8 L4.6 4 L1.2 7.2" fill="none" stroke="#c4c2b4" stroke-width="1.1"/></svg>
<div class="t" style="top:258.92px;font-size:6.4px;font-weight:bold;color:#141414;font-family:'Liberation Sans',sans-serif;-webkit-text-stroke:0.25px #141414;left:248.3px;">2.5</div>
<div class="t" style="top:258.92px;font-size:6.4px;font-weight:bold;color:#141414;font-family:'Liberation Sans',sans-serif;-webkit-text-stroke:0.25px #141414;left:271.5px;">2.5</div>
<div class="t" style="top:276.96px;font-size:6.3px;font-weight:bold;color:#20264c;font-family:'Liberation Sans',sans-serif;right:813.5px;text-align:right;text-shadow:-0.5px -0.5px 0 rgba(190,196,225,0.25);-webkit-text-stroke:0.2px #20264c">TE2</div>
<div class="a" style="left:176.4px;top:273.8px;width:41.29999999999998px;height:12.399999999999977px;background:#56608f;border-top:2px solid #27306a;border-left:2px solid #27306a;border-right:1px solid #9ea6d0;border-bottom:1px solid #9ea6d0;"></div>
<svg class="a" style="left:219.3px;top:273.8px" width="8" height="12.399999999999977"><rect x="0" y="0" width="7.5" height="12.399999999999977" fill="#8a93c4"/><rect x="0" y="0" width="7.5" height="6.199999999999989" fill="#9aa2cf"/><path d="M0.8 5.399999999999989 L3.75 1 L6.7 5.399999999999989 Z" fill="#56618f"/><path d="M1.5 4.9999999999999885 L3.75 2.2 L6 4.9999999999999885" fill="none" stroke="#e8eaf6" stroke-width="0.8"/><path d="M0.8 6.9999999999999885 L3.75 11.399999999999977 L6.7 6.9999999999999885 Z" fill="#56618f"/><path d="M1.5 7.399999999999989 L6 7.399999999999989" fill="none" stroke="#e8eaf6" stroke-width="0.8"/></svg>
<div class="a" style="left:227.5px;top:273.8px;width:11.5px;height:12.399999999999977px;background:#8891c3;border-top:1px solid #c9cee9;border-left:1px solid #c9cee9;border-right:1px solid #2f3868;border-bottom:1px solid #2f3868;"></div>
<svg class="a" style="left:230.25px;top:276.0px" width="6" height="8"><path d="M1.2 0.8 L4.6 4 L1.2 7.2" fill="none" stroke="#c4c2b4" stroke-width="1.1"/></svg>
<div class="t" style="top:276.92px;font-size:6.4px;font-weight:bold;color:#141414;font-family:'Liberation Sans',sans-serif;-webkit-text-stroke:0.25px #141414;left:248.3px;">0.0</div>
<div class="t" style="top:276.92px;font-size:6.4px;font-weight:bold;color:#141414;font-family:'Liberation Sans',sans-serif;-webkit-text-stroke:0.25px #141414;left:271.5px;">0.0</div>
<div class="t" style="top:294.26px;font-size:6.3px;font-weight:bold;color:#20264c;font-family:'Liberation Sans',sans-serif;right:813.5px;text-align:right;text-shadow:-0.5px -0.5px 0 rgba(190,196,225,0.25);-webkit-text-stroke:0.2px #20264c">TR</div>
<div class="a" style="left:176.4px;top:291.1px;width:41.29999999999998px;height:12.399999999999977px;background:#56608f;border-top:2px solid #27306a;border-left:2px solid #27306a;border-right:1px solid #9ea6d0;border-bottom:1px solid #9ea6d0;"></div>
<svg class="a" style="left:219.3px;top:291.1px" width="8" height="12.399999999999977"><rect x="0" y="0" width="7.5" height="12.399999999999977" fill="#8a93c4"/><rect x="0" y="0" width="7.5" height="6.199999999999989" fill="#9aa2cf"/><path d="M0.8 5.399999999999989 L3.75 1 L6.7 5.399999999999989 Z" fill="#56618f"/><path d="M1.5 4.9999999999999885 L3.75 2.2 L6 4.9999999999999885" fill="none" stroke="#e8eaf6" stroke-width="0.8"/><path d="M0.8 6.9999999999999885 L3.75 11.399999999999977 L6.7 6.9999999999999885 Z" fill="#56618f"/><path d="M1.5 7.399999999999989 L6 7.399999999999989" fill="none" stroke="#e8eaf6" stroke-width="0.8"/></svg>
<div class="a" style="left:227.5px;top:291.1px;width:11.5px;height:12.399999999999977px;background:#8891c3;border-top:1px solid #c9cee9;border-left:1px solid #c9cee9;border-right:1px solid #2f3868;border-bottom:1px solid #2f3868;"></div>
<svg class="a" style="left:230.25px;top:293.3px" width="6" height="8"><path d="M1.2 0.8 L4.6 4 L1.2 7.2" fill="none" stroke="#c4c2b4" stroke-width="1.1"/></svg>
<div class="t" style="top:294.22px;font-size:6.4px;font-weight:bold;color:#141414;font-family:'Liberation Sans',sans-serif;-webkit-text-stroke:0.25px #141414;left:248.3px;">7.2</div>
<div class="t" style="top:294.22px;font-size:6.4px;font-weight:bold;color:#141414;font-family:'Liberation Sans',sans-serif;-webkit-text-stroke:0.25px #141414;left:271.5px;">7.2</div>
<div class="t" style="top:311.96px;font-size:6.3px;font-weight:bold;color:#20264c;font-family:'Liberation Sans',sans-serif;right:813.5px;text-align:right;text-shadow:-0.5px -0.5px 0 rgba(190,196,225,0.25);-webkit-text-stroke:0.2px #20264c">Inv. Time</div>
<div class="a" style="left:176.4px;top:308.8px;width:41.29999999999998px;height:12.399999999999977px;background:#56608f;border-top:2px solid #27306a;border-left:2px solid #27306a;border-right:1px solid #9ea6d0;border-bottom:1px solid #9ea6d0;"></div>
<svg class="a" style="left:219.3px;top:308.8px" width="8" height="12.399999999999977"><rect x="0" y="0" width="7.5" height="12.399999999999977" fill="#8a93c4"/><rect x="0" y="0" width="7.5" height="6.199999999999989" fill="#9aa2cf"/><path d="M0.8 5.399999999999989 L3.75 1 L6.7 5.399999999999989 Z" fill="#56618f"/><path d="M1.5 4.9999999999999885 L3.75 2.2 L6 4.9999999999999885" fill="none" stroke="#e8eaf6" stroke-width="0.8"/><path d="M0.8 6.9999999999999885 L3.75 11.399999999999977 L6.7 6.9999999999999885 Z" fill="#56618f"/><path d="M1.5 7.399999999999989 L6 7.399999999999989" fill="none" stroke="#e8eaf6" stroke-width="0.8"/></svg>
<div class="a" style="left:227.5px;top:308.8px;width:11.5px;height:12.399999999999977px;background:#8891c3;border-top:1px solid #c9cee9;border-left:1px solid #c9cee9;border-right:1px solid #2f3868;border-bottom:1px solid #2f3868;"></div>
<svg class="a" style="left:230.25px;top:311.0px" width="6" height="8"><path d="M1.2 0.8 L4.6 4 L1.2 7.2" fill="none" stroke="#c4c2b4" stroke-width="1.1"/></svg>
<div class="t" style="top:311.92px;font-size:6.4px;font-weight:bold;color:#141414;font-family:'Liberation Sans',sans-serif;-webkit-text-stroke:0.25px #141414;left:248.3px;">0</div>
<div class="t" style="top:311.92px;font-size:6.4px;font-weight:bold;color:#141414;font-family:'Liberation Sans',sans-serif;-webkit-text-stroke:0.25px #141414;left:271.5px;">0</div>
<div class="t" style="top:329.26px;font-size:6.3px;font-weight:bold;color:#20264c;font-family:'Liberation Sans',sans-serif;right:813.5px;text-align:right;text-shadow:-0.5px -0.5px 0 rgba(190,196,225,0.25);-webkit-text-stroke:0.2px #20264c">TI2</div>
<div class="a" style="left:176.4px;top:326.1px;width:41.29999999999998px;height:12.399999999999977px;background:#56608f;border-top:2px solid #27306a;border-left:2px solid #27306a;border-right:1px solid #9ea6d0;border-bottom:1px solid #9ea6d0;"></div>
<svg class="a" style="left:219.3px;top:326.1px" width="8" height="12.399999999999977"><rect x="0" y="0" width="7.5" height="12.399999999999977" fill="#8a93c4"/><rect x="0" y="0" width="7.5" height="6.199999999999989" fill="#9aa2cf"/><path d="M0.8 5.399999999999989 L3.75 1 L6.7 5.399999999999989 Z" fill="#56618f"/><path d="M1.5 4.9999999999999885 L3.75 2.2 L6 4.9999999999999885" fill="none" stroke="#e8eaf6" stroke-width="0.8"/><path d="M0.8 6.9999999999999885 L3.75 11.399999999999977 L6.7 6.9999999999999885 Z" fill="#56618f"/><path d="M1.5 7.399999999999989 L6 7.399999999999989" fill="none" stroke="#e8eaf6" stroke-width="0.8"/></svg>
<div class="a" style="left:227.5px;top:326.1px;width:11.5px;height:12.399999999999977px;background:#8891c3;border-top:1px solid #c9cee9;border-left:1px solid #c9cee9;border-right:1px solid #2f3868;border-bottom:1px solid #2f3868;"></div>
<svg class="a" style="left:230.25px;top:328.3px" width="6" height="8"><path d="M1.2 0.8 L4.6 4 L1.2 7.2" fill="none" stroke="#c4c2b4" stroke-width="1.1"/></svg>
<div class="t" style="top:329.22px;font-size:6.4px;font-weight:bold;color:#141414;font-family:'Liberation Sans',sans-serif;-webkit-text-stroke:0.25px #141414;left:248.3px;">0</div>
<div class="t" style="top:329.22px;font-size:6.4px;font-weight:bold;color:#141414;font-family:'Liberation Sans',sans-serif;-webkit-text-stroke:0.25px #141414;left:271.5px;">0</div>
<div class="t" style="top:346.96px;font-size:6.3px;font-weight:bold;color:#20264c;font-family:'Liberation Sans',sans-serif;right:813.5px;text-align:right;text-shadow:-0.5px -0.5px 0 rgba(190,196,225,0.25);-webkit-text-stroke:0.2px #20264c">Flip Angle</div>
<div class="a" style="left:176.4px;top:343.8px;width:41.29999999999998px;height:12.399999999999977px;background:#56608f;border-top:2px solid #27306a;border-left:2px solid #27306a;border-right:1px solid #9ea6d0;border-bottom:1px solid #9ea6d0;"></div>
<svg class="a" style="left:219.3px;top:343.8px" width="8" height="12.399999999999977"><rect x="0" y="0" width="7.5" height="12.399999999999977" fill="#8a93c4"/><rect x="0" y="0" width="7.5" height="6.199999999999989" fill="#9aa2cf"/><path d="M0.8 5.399999999999989 L3.75 1 L6.7 5.399999999999989 Z" fill="#56618f"/><path d="M1.5 4.9999999999999885 L3.75 2.2 L6 4.9999999999999885" fill="none" stroke="#e8eaf6" stroke-width="0.8"/><path d="M0.8 6.9999999999999885 L3.75 11.399999999999977 L6.7 6.9999999999999885 Z" fill="#56618f"/><path d="M1.5 7.399999999999989 L6 7.399999999999989" fill="none" stroke="#e8eaf6" stroke-width="0.8"/></svg>
<div class="a" style="left:227.5px;top:343.8px;width:11.5px;height:12.399999999999977px;background:#8891c3;border-top:1px solid #c9cee9;border-left:1px solid #c9cee9;border-right:1px solid #2f3868;border-bottom:1px solid #2f3868;"></div>
<svg class="a" style="left:230.25px;top:346.0px" width="6" height="8"><path d="M1.2 0.8 L4.6 4 L1.2 7.2" fill="none" stroke="#c4c2b4" stroke-width="1.1"/></svg>
<div class="t" style="top:346.92px;font-size:6.4px;font-weight:bold;color:#141414;font-family:'Liberation Sans',sans-serif;-webkit-text-stroke:0.25px #141414;left:248.3px;">30</div>
<div class="t" style="top:346.92px;font-size:6.4px;font-weight:bold;color:#141414;font-family:'Liberation Sans',sans-serif;-webkit-text-stroke:0.25px #141414;left:271.5px;">30</div>
<div class="t" style="top:360.96px;font-size:6.3px;font-weight:bold;color:#20264c;font-family:'Liberation Sans',sans-serif;right:813.5px;text-align:right;text-shadow:-0.5px -0.5px 0 rgba(190,196,225,0.25);-webkit-text-stroke:0.2px #20264c">Echo Train</div>
<div class="t" style="top:368.26px;font-size:6.3px;font-weight:bold;color:#20264c;font-family:'Liberation Sans',sans-serif;right:813.5px;text-align:right;text-shadow:-0.5px -0.5px 0 rgba(190,196,225,0.25);-webkit-text-stroke:0.2px #20264c">Length</div>
<div class="a" style="left:176.4px;top:361.3px;width:41.29999999999998px;height:12.399999999999977px;background:#56608f;border-top:2px solid #27306a;border-left:2px solid #27306a;border-right:1px solid #9ea6d0;border-bottom:1px solid #9ea6d0;"></div>
<svg class="a" style="left:219.3px;top:361.3px" width="8" height="12.399999999999977"><rect x="0" y="0" width="7.5" height="12.399999999999977" fill="#8a93c4"/><rect x="0" y="0" width="7.5" height="6.199999999999989" fill="#9aa2cf"/><path d="M0.8 5.399999999999989 L3.75 1 L6.7 5.399999999999989 Z" fill="#56618f"/><path d="M1.5 4.9999999999999885 L3.75 2.2 L6 4.9999999999999885" fill="none" stroke="#e8eaf6" stroke-width="0.8"/><path d="M0.8 6.9999999999999885 L3.75 11.399999999999977 L6.7 6.9999999999999885 Z" fill="#56618f"/><path d="M1.5 7.399999999999989 L6 7.399999999999989" fill="none" stroke="#e8eaf6" stroke-width="0.8"/></svg>
<div class="a" style="left:227.5px;top:361.3px;width:11.5px;height:12.399999999999977px;background:#8891c3;border-top:1px solid #c9cee9;border-left:1px solid #c9cee9;border-right:1px solid #2f3868;border-bottom:1px solid #2f3868;"></div>
<svg class="a" style="left:230.25px;top:363.5px" width="6" height="8"><path d="M1.2 0.8 L4.6 4 L1.2 7.2" fill="none" stroke="#c4c2b4" stroke-width="1.1"/></svg>
<div class="t" style="top:381.96px;font-size:6.3px;font-weight:bold;color:#20264c;font-family:'Liberation Sans',sans-serif;right:813.5px;text-align:right;text-shadow:-0.5px -0.5px 0 rgba(190,196,225,0.25);-webkit-text-stroke:0.2px #20264c">Bandwidth</div>
<div class="a" style="left:176.4px;top:378.8px;width:41.29999999999998px;height:12.399999999999977px;background:#56608f;border-top:2px solid #27306a;border-left:2px solid #27306a;border-right:1px solid #9ea6d0;border-bottom:1px solid #9ea6d0;"></div>
<svg class="a" style="left:219.3px;top:378.8px" width="8" height="12.399999999999977"><rect x="0" y="0" width="7.5" height="12.399999999999977" fill="#8a93c4"/><rect x="0" y="0" width="7.5" height="6.199999999999989" fill="#9aa2cf"/><path d="M0.8 5.399999999999989 L3.75 1 L6.7 5.399999999999989 Z" fill="#56618f"/><path d="M1.5 4.9999999999999885 L3.75 2.2 L6 4.9999999999999885" fill="none" stroke="#e8eaf6" stroke-width="0.8"/><path d="M0.8 6.9999999999999885 L3.75 11.399999999999977 L6.7 6.9999999999999885 Z" fill="#56618f"/><path d="M1.5 7.399999999999989 L6 7.399999999999989" fill="none" stroke="#e8eaf6" stroke-width="0.8"/></svg>
<div class="a" style="left:227.5px;top:378.8px;width:11.5px;height:12.399999999999977px;background:#8891c3;border-top:1px solid #c9cee9;border-left:1px solid #c9cee9;border-right:1px solid #2f3868;border-bottom:1px solid #2f3868;"></div>
<svg class="a" style="left:230.25px;top:381.0px" width="6" height="8"><path d="M1.2 0.8 L4.6 4 L1.2 7.2" fill="none" stroke="#c4c2b4" stroke-width="1.1"/></svg>
<div class="t" style="top:381.92px;font-size:6.4px;font-weight:bold;color:#141414;font-family:'Liberation Sans',sans-serif;-webkit-text-stroke:0.25px #141414;left:248.3px;">31.2</div>
<div class="t" style="top:381.92px;font-size:6.4px;font-weight:bold;color:#141414;font-family:'Liberation Sans',sans-serif;-webkit-text-stroke:0.25px #141414;left:271.5px;">31.2</div>
<div class="t" style="top:399.66px;font-size:6.3px;font-weight:bold;color:#20264c;font-family:'Liberation Sans',sans-serif;right:813.5px;text-align:right;text-shadow:-0.5px -0.5px 0 rgba(190,196,225,0.25);-webkit-text-stroke:0.2px #20264c">Bandwidth2</div>
<div class="a" style="left:176.4px;top:396.5px;width:41.29999999999998px;height:12.399999999999977px;background:#56608f;border-top:2px solid #27306a;border-left:2px solid #27306a;border-right:1px solid #9ea6d0;border-bottom:1px solid #9ea6d0;"></div>
<svg class="a" style="left:219.3px;top:396.5px" width="8" height="12.399999999999977"><rect x="0" y="0" width="7.5" height="12.399999999999977" fill="#8a93c4"/><rect x="0" y="0" width="7.5" height="6.199999999999989" fill="#9aa2cf"/><path d="M0.8 5.399999999999989 L3.75 1 L6.7 5.399999999999989 Z" fill="#56618f"/><path d="M1.5 4.9999999999999885 L3.75 2.2 L6 4.9999999999999885" fill="none" stroke="#e8eaf6" stroke-width="0.8"/><path d="M0.8 6.9999999999999885 L3.75 11.399999999999977 L6.7 6.9999999999999885 Z" fill="#56618f"/><path d="M1.5 7.399999999999989 L6 7.399999999999989" fill="none" stroke="#e8eaf6" stroke-width="0.8"/></svg>
<div class="a" style="left:227.5px;top:396.5px;width:11.5px;height:12.399999999999977px;background:#8891c3;border-top:1px solid #c9cee9;border-left:1px solid #c9cee9;border-right:1px solid #2f3868;border-bottom:1px solid #2f3868;"></div>
<svg class="a" style="left:230.25px;top:398.7px" width="6" height="8"><path d="M1.2 0.8 L4.6 4 L1.2 7.2" fill="none" stroke="#c4c2b4" stroke-width="1.1"/></svg>
<div class="t" style="top:399.62px;font-size:6.4px;font-weight:bold;color:#141414;font-family:'Liberation Sans',sans-serif;-webkit-text-stroke:0.25px #141414;left:248.3px;">31.2</div>
<div class="t" style="top:399.62px;font-size:6.4px;font-weight:bold;color:#141414;font-family:'Liberation Sans',sans-serif;-webkit-text-stroke:0.25px #141414;left:271.5px;">31.2</div>
<div class="t" style="top:206.90px;font-size:8.5px;font-weight:bold;color:#141414;font-family:'Liberation Sans',sans-serif;-webkit-text-stroke:0.25px #141414;left:337.7px;">Additional&nbsp;&nbsp;Parameters</div>
<div class="a" style="left:317px;top:222px;width:33px;height:32.69999999999999px;background:#7781b5;border-top:1px solid #b9c0e2;border-left:1px solid #b9c0e2;border-right:1px solid #2e3666;border-bottom:1px solid #2e3666;"></div>
<div class="a" style="left:317px;top:273.3px;width:33px;height:32.89999999999998px;background:#7781b5;border-top:1px solid #b9c0e2;border-left:1px solid #b9c0e2;border-right:1px solid #2e3666;border-bottom:1px solid #2e3666;"></div>
<div class="a" style="left:355.4px;top:222px;width:33.200000000000045px;height:32.69999999999999px;background:#7781b5;border-top:1px solid #b9c0e2;border-left:1px solid #b9c0e2;border-right:1px solid #2e3666;border-bottom:1px solid #2e3666;"></div>
<div class="a" style="left:355.4px;top:273.3px;width:33.200000000000045px;height:32.89999999999998px;background:#7781b5;border-top:1px solid #b9c0e2;border-left:1px solid #b9c0e2;border-right:1px solid #2e3666;border-bottom:1px solid #2e3666;"></div>
<div class="a" style="left:394px;top:222px;width:33px;height:32.69999999999999px;background:#7781b5;border-top:1px solid #b9c0e2;border-left:1px solid #b9c0e2;border-right:1px solid #2e3666;border-bottom:1px solid #2e3666;"></div>
<div class="a" style="left:394px;top:273.3px;width:33px;height:32.89999999999998px;background:#7781b5;border-top:1px solid #b9c0e2;border-left:1px solid #b9c0e2;border-right:1px solid #2e3666;border-bottom:1px solid #2e3666;"></div>
<div class="a" style="left:432.8px;top:222px;width:32.39999999999998px;height:32.69999999999999px;background:#7781b5;border-top:1px solid #b9c0e2;border-left:1px solid #b9c0e2;border-right:1px solid #2e3666;border-bottom:1px solid #2e3666;"></div>
<div class="a" style="left:432.8px;top:273.3px;width:32.39999999999998px;height:32.89999999999998px;background:#7781b5;border-top:1px solid #b9c0e2;border-left:1px solid #b9c0e2;border-right:1px solid #2e3666;border-bottom:1px solid #2e3666;"></div>
<svg class="a" style="left:318px;top:223px" width="32" height="31">
<ellipse cx="16.5" cy="15.5" rx="11.5" ry="8.5" fill="#f0f0f0"/>
<ellipse cx="16.5" cy="15.5" rx="10" ry="7.2" fill="#9a9a9a"/>
<path d="M8 13 Q11 9 15 11 Q19 8 23 11 Q26 13 25 16 M9 17 Q12 21 16 19 Q20 22 24 18 M12 14 Q15 16 13 18 M18 12 Q21 15 19 19" stroke="#3a3a3a" stroke-width="0.9" fill="none"/>
<path d="M10 12 L12 13 M20 17 L23 16 M14 20 L17 21" stroke="#e0e0e0" stroke-width="0.8"/>
<path d="M5 26 L25 7 M7.5 28 L27.5 9 M10 30 L30 11" stroke="#a8283a" stroke-width="1.1"/>
<path d="M6 27 L26 8 M8.5 29 L28.5 10" stroke="#444" stroke-width="0.5"/>
<rect x="3" y="4" width="4" height="1.2" fill="#d8d8e8"/><rect x="24" y="26" width="4" height="1.2" fill="#d8d8e8"/>
</svg>
<svg class="a" style="left:356px;top:223px" width="32" height="31">
<defs><radialGradient id="hd" cx="0.55" cy="0.45" r="0.6"><stop offset="0" stop-color="#f4f4f4"/><stop offset="1" stop-color="#8a8a8a"/></radialGradient></defs>
<path d="M4 16 C4 9 8 6 13 6 C17 6 19.5 9 20 12 L21.5 16 L20 17 Q20.5 19 19.5 20 Q19 22.5 16 22 L15.5 25 L8 25 Q4 21 4 16 Z" fill="url(#hd)"/>
<path d="M4 16 C4 9 8 6 13 6 C16 6 17 8 15 9 Q11 10 11 14 L10 18 Q9 22 8 25 Q4 21 4 16 Z" fill="#1e1e1e"/>
<path d="M16 17 L19 17.5" stroke="#444" stroke-width="0.6"/>
<path d="M21.5 12.5 Q23.5 15.5 21.5 18.5 M24 10.5 Q27 15.5 24 20.5 M26.5 8.5 Q30.5 15.5 26.5 22.5" stroke="#1e1e1e" stroke-width="1.3" fill="none"/>
</svg>
<div class="t" style="top:259.82px;font-size:6.6px;font-weight:bold;color:#141414;font-family:'Liberation Sans',sans-serif;-webkit-text-stroke:0.25px #141414;left:183.5px;width:300px;text-align:center;">Graphic Rx</div>
<div class="t" style="top:259.82px;font-size:6.6px;font-weight:bold;color:#141414;font-family:'Liberation Sans',sans-serif;-webkit-text-stroke:0.25px #141414;left:221.8px;width:300px;text-align:center;">OFF</div>
<div class="t" style="top:256.46px;font-size:6.3px;font-weight:bold;color:#20264c;font-family:'Liberation Sans',sans-serif;left:260.5px;width:300px;text-align:center;text-shadow:-0.5px -0.5px 0 rgba(190,196,225,0.25);-webkit-text-stroke:0.2px #20264c">Image</div>
<div class="t" style="top:263.46px;font-size:6.3px;font-weight:bold;color:#20264c;font-family:'Liberation Sans',sans-serif;left:260.5px;width:300px;text-align:center;text-shadow:-0.5px -0.5px 0 rgba(190,196,225,0.25);-webkit-text-stroke:0.2px #20264c">Enhance</div>
<div class="t" style="top:255.46px;font-size:6.3px;font-weight:bold;color:#20264c;font-family:'Liberation Sans',sans-serif;left:299px;width:300px;text-align:center;text-shadow:-0.5px -0.5px 0 rgba(190,196,225,0.25);-webkit-text-stroke:0.2px #20264c">User CVs</div>
<div class="t" style="top:262.46px;font-size:6.3px;font-weight:bold;color:#20264c;font-family:'Liberation Sans',sans-serif;left:299px;width:300px;text-align:center;text-shadow:-0.5px -0.5px 0 rgba(190,196,225,0.25);-webkit-text-stroke:0.2px #20264c">Screen</div>
<div class="t" style="top:206.90px;font-size:8.5px;font-weight:bold;color:#141414;font-family:'Liberation Sans',sans-serif;-webkit-text-stroke:0.25px #141414;left:526.6px;">Acquisition&nbsp;&nbsp;Timing</div>
<div class="t" style="top:225.42px;font-size:6.4px;font-weight:bold;color:#141414;font-family:'Liberation Sans',sans-serif;-webkit-text-stroke:0.25px #141414;right:462px;text-align:right;">Freq</div>
<div class="a" style="left:527.5px;top:222.2px;width:21.700000000000045px;height:12.600000000000023px;background:#dfe1ee;border-top:1.5px solid #283167;border-left:1.5px solid #283167;border-right:1px solid #c9cce2;border-bottom:1px solid #c9cce2;"></div>
<div class="t" style="top:225.67px;font-size:6.5px;font-weight:bold;color:#141414;font-family:'Liberation Sans',sans-serif;-webkit-text-stroke:0.25px #141414;left:530.0px;">256</div>
<div class="a" style="left:551.5px;top:222.4px;width:12.0px;height:12.599999999999994px;background:#737db1;border-top:1px solid #b4bbdd;border-left:1px solid #b4bbdd;border-right:1px solid #2f3868;border-bottom:1px solid #2f3868;"></div>
<svg class="a" style="left:554.5px;top:224.7px" width="6" height="8"><path d="M1.2 0.8 L4.6 4 L1.2 7.2" fill="none" stroke="#2a3055" stroke-width="1.1"/></svg>
<div class="t" style="top:243.42px;font-size:6.4px;font-weight:bold;color:#141414;font-family:'Liberation Sans',sans-serif;-webkit-text-stroke:0.25px #141414;right:462px;text-align:right;">Phase</div>
<div class="a" style="left:527.5px;top:240.2px;width:21.700000000000045px;height:12.600000000000023px;background:#dfe1ee;border-top:1.5px solid #283167;border-left:1.5px solid #283167;border-right:1px solid #c9cce2;border-bottom:1px solid #c9cce2;"></div>
<div class="t" style="top:243.67px;font-size:6.5px;font-weight:bold;color:#141414;font-family:'Liberation Sans',sans-serif;-webkit-text-stroke:0.25px #141414;left:530.0px;">128</div>
<div class="a" style="left:551.5px;top:240.4px;width:12.0px;height:12.599999999999994px;background:#737db1;border-top:1px solid #b4bbdd;border-left:1px solid #b4bbdd;border-right:1px solid #2f3868;border-bottom:1px solid #2f3868;"></div>
<svg class="a" style="left:554.5px;top:242.7px" width="6" height="8"><path d="M1.2 0.8 L4.6 4 L1.2 7.2" fill="none" stroke="#2a3055" stroke-width="1.1"/></svg>
<div class="t" style="top:260.92px;font-size:6.4px;font-weight:bold;color:#141414;font-family:'Liberation Sans',sans-serif;-webkit-text-stroke:0.25px #141414;right:462px;text-align:right;">NEX</div>
<div class="a" style="left:527.5px;top:257.7px;width:21.700000000000045px;height:12.600000000000023px;background:#dfe1ee;border-top:1.5px solid #283167;border-left:1.5px solid #283167;border-right:1px solid #c9cce2;border-bottom:1px solid #c9cce2;"></div>
<div class="t" style="top:261.17px;font-size:6.5px;font-weight:bold;color:#141414;font-family:'Liberation Sans',sans-serif;-webkit-text-stroke:0.25px #141414;left:530.0px;">1.00</div>
<div class="a" style="left:551.5px;top:257.9px;width:12.0px;height:12.600000000000023px;background:#737db1;border-top:1px solid #b4bbdd;border-left:1px solid #b4bbdd;border-right:1px solid #2f3868;border-bottom:1px solid #2f3868;"></div>
<svg class="a" style="left:554.5px;top:260.2px" width="6" height="8"><path d="M1.2 0.8 L4.6 4 L1.2 7.2" fill="none" stroke="#2a3055" stroke-width="1.1"/></svg>
<div class="t" style="top:274.62px;font-size:6.4px;font-weight:bold;color:#141414;font-family:'Liberation Sans',sans-serif;-webkit-text-stroke:0.25px #141414;right:462px;text-align:right;">Phase</div>
<div class="t" style="top:282.02px;font-size:6.4px;font-weight:bold;color:#141414;font-family:'Liberation Sans',sans-serif;-webkit-text-stroke:0.25px #141414;right:462px;text-align:right;">FOV</div>
<div class="a" style="left:527.5px;top:275.0px;width:21.700000000000045px;height:12.600000000000023px;background:#dfe1ee;border-top:1.5px solid #283167;border-left:1.5px solid #283167;border-right:1px solid #c9cce2;border-bottom:1px solid #c9cce2;"></div>
<div class="t" style="top:278.47px;font-size:6.5px;font-weight:bold;color:#141414;font-family:'Liberation Sans',sans-serif;-webkit-text-stroke:0.25px #141414;left:530.0px;">1.00</div>
<div class="a" style="left:551.5px;top:275.2px;width:12.0px;height:12.600000000000023px;background:#737db1;border-top:1px solid #b4bbdd;border-left:1px solid #b4bbdd;border-right:1px solid #2f3868;border-bottom:1px solid #2f3868;"></div>
<svg class="a" style="left:554.5px;top:277.5px" width="6" height="8"><path d="M1.2 0.8 L4.6 4 L1.2 7.2" fill="none" stroke="#2a3055" stroke-width="1.1"/></svg>
<div class="t" style="top:292.76px;font-size:6.3px;font-weight:bold;color:#20264c;font-family:'Liberation Sans',sans-serif;right:462px;text-align:right;text-shadow:-0.5px -0.5px 0 rgba(190,196,225,0.25);-webkit-text-stroke:0.2px #20264c">Acqs Before</div>
<div class="t" style="top:299.76px;font-size:6.3px;font-weight:bold;color:#20264c;font-family:'Liberation Sans',sans-serif;right:462px;text-align:right;text-shadow:-0.5px -0.5px 0 rgba(190,196,225,0.25);-webkit-text-stroke:0.2px #20264c">Pause:</div>
<div class="a" style="left:527.5px;top:293.5px;width:21.899999999999977px;height:12.0px;background:#56608f;border-top:2px solid #27306a;border-left:2px solid #27306a;border-right:1px solid #9ea6d0;border-bottom:1px solid #9ea6d0;"></div>
<div class="a" style="left:551.5px;top:293.5px;width:12.0px;height:12.5px;background:#8891c3;border-top:1px solid #c9cee9;border-left:1px solid #c9cee9;border-right:1px solid #2f3868;border-bottom:1px solid #2f3868;"></div>
<svg class="a" style="left:554.5px;top:295.75px" width="6" height="8"><path d="M1.2 0.8 L4.6 4 L1.2 7.2" fill="none" stroke="#c4c2b4" stroke-width="1.1"/></svg>
<div class="t" style="top:226.12px;font-size:6.4px;font-weight:bold;color:#141414;font-family:'Liberation Sans',sans-serif;-webkit-text-stroke:0.25px #141414;right:377.5px;text-align:right;">Freq DIR</div>
<div class="a" style="left:611.7px;top:223.2px;width:30.09999999999991px;height:12.300000000000011px;background:#dfe1ee;border-top:1.5px solid #283167;border-left:1.5px solid #283167;border-right:1px solid #c9cce2;border-bottom:1px solid #c9cce2;"></div>
<div class="t" style="top:226.52px;font-size:6.5px;font-weight:bold;color:#141414;font-family:'Liberation Sans',sans-serif;-webkit-text-stroke:0.25px #141414;left:614.2px;">Unswap</div>
<div class="a" style="left:643px;top:223px;width:11.299999999999955px;height:13px;background:#737db1;border-top:1px solid #b4bbdd;border-left:1px solid #b4bbdd;border-right:1px solid #2f3868;border-bottom:1px solid #2f3868;"></div>
<svg class="a" style="left:645.65px;top:225.5px" width="6" height="8"><path d="M1.2 0.8 L4.6 4 L1.2 7.2" fill="none" stroke="#2a3055" stroke-width="1.1"/></svg>
<div class="t" style="top:240.26px;font-size:6.3px;font-weight:bold;color:#20264c;font-family:'Liberation Sans',sans-serif;right:377.5px;text-align:right;text-shadow:-0.5px -0.5px 0 rgba(190,196,225,0.25);-webkit-text-stroke:0.2px #20264c">Flow Comp</div>
<div class="t" style="top:247.56px;font-size:6.3px;font-weight:bold;color:#20264c;font-family:'Liberation Sans',sans-serif;right:377.5px;text-align:right;text-shadow:-0.5px -0.5px 0 rgba(190,196,225,0.25);-webkit-text-stroke:0.2px #20264c">Direction</div>
<div class="a" style="left:611.7px;top:240px;width:30.09999999999991px;height:12.5px;background:#56608f;border-top:2px solid #27306a;border-left:2px solid #27306a;border-right:1px solid #9ea6d0;border-bottom:1px solid #9ea6d0;"></div>
<div class="a" style="left:643px;top:240px;width:11.299999999999955px;height:13px;background:#8891c3;border-top:1px solid #c9cee9;border-left:1px solid #c9cee9;border-right:1px solid #2f3868;border-bottom:1px solid #2f3868;"></div>
<svg class="a" style="left:645.65px;top:242.5px" width="6" height="8"><path d="M1.2 0.8 L4.6 4 L1.2 7.2" fill="none" stroke="#c4c2b4" stroke-width="1.1"/></svg>
<div class="t" style="top:261.42px;font-size:6.4px;font-weight:bold;color:#141414;font-family:'Liberation Sans',sans-serif;-webkit-text-stroke:0.25px #141414;right:377.5px;text-align:right;">Shim</div>
<div class="a" style="left:611.7px;top:258.5px;width:30.09999999999991px;height:12.0px;background:#dfe1ee;border-top:1.5px solid #283167;border-left:1.5px solid #283167;border-right:1px solid #c9cce2;border-bottom:1px solid #c9cce2;"></div>
<div class="t" style="top:261.67px;font-size:6.5px;font-weight:bold;color:#141414;font-family:'Liberation Sans',sans-serif;-webkit-text-stroke:0.25px #141414;left:614.2px;">Auto</div>
<div class="a" style="left:643px;top:258.3px;width:11.299999999999955px;height:12.699999999999989px;background:#737db1;border-top:1px solid #b4bbdd;border-left:1px solid #b4bbdd;border-right:1px solid #2f3868;border-bottom:1px solid #2f3868;"></div>
<svg class="a" style="left:645.65px;top:260.65px" width="6" height="8"><path d="M1.2 0.8 L4.6 4 L1.2 7.2" fill="none" stroke="#2a3055" stroke-width="1.1"/></svg>
<div class="a" style="left:581px;top:274.5px;width:8px;height:8.0px;background:#5c6694;border-top:1px solid #a9b1d8;border-left:1px solid #a9b1d8;border-right:1px solid #2c3564;border-bottom:1px solid #2c3564;"></div>
<div class="t" style="top:275.26px;font-size:6.3px;font-weight:bold;color:#20264c;font-family:'Liberation Sans',sans-serif;left:592px;text-shadow:-0.5px -0.5px 0 rgba(190,196,225,0.25);-webkit-text-stroke:0.2px #20264c">Phase Correct</div>
<div class="a" style="left:581px;top:285px;width:8px;height:8px;background:#5c6694;border-top:1px solid #a9b1d8;border-left:1px solid #a9b1d8;border-right:1px solid #2c3564;border-bottom:1px solid #2c3564;"></div>
<div class="t" style="top:285.67px;font-size:6.5px;font-weight:bold;color:#141414;font-family:'Liberation Sans',sans-serif;-webkit-text-stroke:0.25px #141414;left:592px;">Contrast</div>
<div class="t" style="top:300.76px;font-size:6.3px;font-weight:bold;color:#20264c;font-family:'Liberation Sans',sans-serif;font-style:italic;right:390px;text-align:right;text-shadow:-0.5px -0.5px 0 rgba(190,196,225,0.25);-webkit-text-stroke:0.2px #20264c">Amt</div>
<div class="a" style="left:603.5px;top:297.5px;width:38.5px;height:12.5px;background:#56608f;border-top:2px solid #27306a;border-left:2px solid #27306a;border-right:1px solid #9ea6d0;border-bottom:1px solid #9ea6d0;"></div>
<div class="t" style="top:300.42px;font-size:6.4px;font-weight:bold;color:#141414;font-family:'Liberation Sans',sans-serif;-webkit-text-stroke:0.25px #141414;left:644px;">ml</div>
<div class="t" style="top:317.26px;font-size:6.3px;font-weight:bold;color:#20264c;font-family:'Liberation Sans',sans-serif;font-style:italic;right:390px;text-align:right;text-shadow:-0.5px -0.5px 0 rgba(190,196,225,0.25);-webkit-text-stroke:0.2px #20264c">Agent</div>
<div class="a" style="left:603.5px;top:314px;width:38.5px;height:12.5px;background:#56608f;border-top:2px solid #27306a;border-left:2px solid #27306a;border-right:1px solid #9ea6d0;border-bottom:1px solid #9ea6d0;"></div>
<div class="t" style="top:335.50px;font-size:8.5px;font-weight:bold;color:#141414;font-family:'Liberation Sans',sans-serif;-webkit-text-stroke:0.25px #141414;left:445.8px;">Scanning&nbsp;&nbsp;Range</div>
<div class="t" style="top:362.52px;font-size:6.4px;font-weight:bold;color:#141414;font-family:'Liberation Sans',sans-serif;-webkit-text-stroke:0.25px #141414;right:644.5px;text-align:right;">FOV</div>
<div class="a" style="left:346.5px;top:359.7px;width:32.5px;height:11.800000000000011px;background:#dfe1ee;border-top:1.5px solid #283167;border-left:1.5px solid #283167;border-right:1px solid #c9cce2;border-bottom:1px solid #c9cce2;"></div>
<div class="t" style="top:362.77px;font-size:6.5px;font-weight:bold;color:#141414;font-family:'Liberation Sans',sans-serif;-webkit-text-stroke:0.25px #141414;left:349.0px;">27.0</div>
<svg class="a" style="left:381px;top:358.8px" width="8" height="13.199999999999989"><rect x="0" y="0" width="7.5" height="13.199999999999989" fill="#8a93c4"/><rect x="0" y="0" width="7.5" height="6.599999999999994" fill="#9aa2cf"/><path d="M0.8 5.7999999999999945 L3.75 1 L6.7 5.7999999999999945 Z" fill="#56618f"/><path d="M1.5 5.399999999999994 L3.75 2.2 L6 5.399999999999994" fill="none" stroke="#e8eaf6" stroke-width="0.8"/><path d="M0.8 7.399999999999994 L3.75 12.199999999999989 L6.7 7.399999999999994 Z" fill="#56618f"/><path d="M1.5 7.7999999999999945 L6 7.7999999999999945" fill="none" stroke="#e8eaf6" stroke-width="0.8"/></svg>
<div class="a" style="left:388px;top:359.5px;width:12px;height:12.5px;background:#8891c3;border-top:1px solid #c9cee9;border-left:1px solid #c9cee9;border-right:1px solid #2f3868;border-bottom:1px solid #2f3868;"></div>
<svg class="a" style="left:391.0px;top:361.75px" width="6" height="8"><path d="M1.2 0.8 L4.6 4 L1.2 7.2" fill="none" stroke="#c4c2b4" stroke-width="1.1"/></svg>
<div class="t" style="top:377.42px;font-size:6.4px;font-weight:bold;color:#141414;font-family:'Liberation Sans',sans-serif;-webkit-text-stroke:0.25px #141414;right:642px;text-align:right;">Slice</div>
<div class="t" style="top:384.22px;font-size:6.4px;font-weight:bold;color:#141414;font-family:'Liberation Sans',sans-serif;-webkit-text-stroke:0.25px #141414;right:642px;text-align:right;">Thickness:</div>
<div class="a" style="left:346.5px;top:377.5px;width:32.5px;height:12.0px;background:#dfe1ee;border-top:1.5px solid #283167;border-left:1.5px solid #283167;border-right:1px solid #c9cce2;border-bottom:1px solid #c9cce2;"></div>
<div class="t" style="top:380.67px;font-size:6.5px;font-weight:bold;color:#141414;font-family:'Liberation Sans',sans-serif;-webkit-text-stroke:0.25px #141414;left:349.0px;">5.0</div>
<svg class="a" style="left:381px;top:376.8px" width="8" height="13.199999999999989"><rect x="0" y="0" width="7.5" height="13.199999999999989" fill="#8a93c4"/><rect x="0" y="0" width="7.5" height="6.599999999999994" fill="#9aa2cf"/><path d="M0.8 5.7999999999999945 L3.75 1 L6.7 5.7999999999999945 Z" fill="#56618f"/><path d="M1.5 5.399999999999994 L3.75 2.2 L6 5.399999999999994" fill="none" stroke="#e8eaf6" stroke-width="0.8"/><path d="M0.8 7.399999999999994 L3.75 12.199999999999989 L6.7 7.399999999999994 Z" fill="#56618f"/><path d="M1.5 7.7999999999999945 L6 7.7999999999999945" fill="none" stroke="#e8eaf6" stroke-width="0.8"/></svg>
<div class="a" style="left:388px;top:377.3px;width:12px;height:12.699999999999989px;background:#8891c3;border-top:1px solid #c9cee9;border-left:1px solid #c9cee9;border-right:1px solid #2f3868;border-bottom:1px solid #2f3868;"></div>
<svg class="a" style="left:391.0px;top:379.65px" width="6" height="8"><path d="M1.2 0.8 L4.6 4 L1.2 7.2" fill="none" stroke="#c4c2b4" stroke-width="1.1"/></svg>
<div class="t" style="top:349.91px;font-size:6px;font-weight:bold;color:#141414;font-family:'Liberation Sans',sans-serif;-webkit-text-stroke:0.25px #141414;left:265px;width:300px;text-align:center;">Min.</div>
<div class="t" style="top:349.91px;font-size:6px;font-weight:bold;color:#141414;font-family:'Liberation Sans',sans-serif;-webkit-text-stroke:0.25px #141414;left:291.7px;width:300px;text-align:center;">Max.</div>
<div class="t" style="top:359.52px;font-size:6.4px;font-weight:bold;color:#141414;font-family:'Liberation Sans',sans-serif;-webkit-text-stroke:0.25px #141414;left:408.5px;">9</div>
<div class="t" style="top:359.52px;font-size:6.4px;font-weight:bold;color:#141414;font-family:'Liberation Sans',sans-serif;-webkit-text-stroke:0.25px #141414;left:436px;">48</div>
<div class="t" style="top:348.42px;font-size:6.4px;font-weight:bold;color:#141414;font-family:'Liberation Sans',sans-serif;-webkit-text-stroke:0.25px #141414;left:375.70000000000005px;width:300px;text-align:center;">S / I</div>
<div class="t" style="top:407.92px;font-size:6.4px;font-weight:bold;color:#141414;font-family:'Liberation Sans',sans-serif;-webkit-text-stroke:0.25px #141414;left:375.70000000000005px;width:300px;text-align:center;">Axial</div>
<div class="t" style="top:348.42px;font-size:6.4px;font-weight:bold;color:#141414;font-family:'Liberation Sans',sans-serif;-webkit-text-stroke:0.25px #141414;left:420.5px;width:300px;text-align:center;">R / L</div>
<div class="t" style="top:407.92px;font-size:6.4px;font-weight:bold;color:#141414;font-family:'Liberation Sans',sans-serif;-webkit-text-stroke:0.25px #141414;left:420.5px;width:300px;text-align:center;">Sagittal</div>
<div class="t" style="top:348.42px;font-size:6.4px;font-weight:bold;color:#141414;font-family:'Liberation Sans',sans-serif;-webkit-text-stroke:0.25px #141414;left:465.5px;width:300px;text-align:center;">A / P</div>
<div class="t" style="top:407.92px;font-size:6.4px;font-weight:bold;color:#141414;font-family:'Liberation Sans',sans-serif;-webkit-text-stroke:0.25px #141414;left:465.5px;width:300px;text-align:center;">Coronal</div>
<div class="t" style="top:361.26px;font-size:6.3px;font-weight:bold;color:#141414;font-family:'Liberation Sans',sans-serif;-webkit-text-stroke:0.25px #141414;right:480.5px;text-align:right;">Center</div>
<div class="a" style="left:508.5px;top:358.3px;width:34.5px;height:12.0px;background:#dfe1ee;border-top:1.5px solid #283167;border-left:1.5px solid #283167;border-right:1px solid #c9cce2;border-bottom:1px solid #c9cce2;"></div>
<div class="t" style="top:361.47px;font-size:6.5px;font-weight:bold;color:#141414;font-family:'Liberation Sans',sans-serif;-webkit-text-stroke:0.25px #141414;left:511.0px;">0.0</div>
<div class="a" style="left:553px;top:358.3px;width:35px;height:12.0px;background:#dfe1ee;border-top:1.5px solid #283167;border-left:1.5px solid #283167;border-right:1px solid #c9cce2;border-bottom:1px solid #c9cce2;"></div>
<div class="t" style="top:361.47px;font-size:6.5px;font-weight:bold;color:#141414;font-family:'Liberation Sans',sans-serif;-webkit-text-stroke:0.25px #141414;left:555.5px;">0.0</div>
<div class="a" style="left:597.5px;top:358.3px;width:36.0px;height:12.0px;background:#dfe1ee;border-top:1.5px solid #283167;border-left:1.5px solid #283167;border-right:1px solid #c9cce2;border-bottom:1px solid #c9cce2;"></div>
<div class="t" style="top:361.47px;font-size:6.5px;font-weight:bold;color:#141414;font-family:'Liberation Sans',sans-serif;-webkit-text-stroke:0.25px #141414;left:600.0px;">A25.0</div>
<div class="t" style="top:378.46px;font-size:6.3px;font-weight:bold;color:#141414;font-family:'Liberation Sans',sans-serif;-webkit-text-stroke:0.25px #141414;right:483.5px;text-align:right;">Spacing</div>
<div class="a" style="left:508.5px;top:375.5px;width:34.5px;height:12.0px;background:#dfe1ee;border-top:1.5px solid #283167;border-left:1.5px solid #283167;border-right:1px solid #c9cce2;border-bottom:1px solid #c9cce2;"></div>
<div class="t" style="top:378.67px;font-size:6.5px;font-weight:bold;color:#141414;font-family:'Liberation Sans',sans-serif;-webkit-text-stroke:0.25px #141414;left:511.0px;">5.0</div>
<div class="a" style="left:553px;top:375.5px;width:35px;height:12.0px;background:#dfe1ee;border-top:1.5px solid #283167;border-left:1.5px solid #283167;border-right:1px solid #c9cce2;border-bottom:1px solid #c9cce2;"></div>
<div class="t" style="top:378.67px;font-size:6.5px;font-weight:bold;color:#141414;font-family:'Liberation Sans',sans-serif;-webkit-text-stroke:0.25px #141414;left:555.5px;">5.0</div>
<div class="a" style="left:597.5px;top:375.5px;width:36.0px;height:12.0px;background:#dfe1ee;border-top:1.5px solid #283167;border-left:1.5px solid #283167;border-right:1px solid #c9cce2;border-bottom:1px solid #c9cce2;"></div>
<div class="t" style="top:378.67px;font-size:6.5px;font-weight:bold;color:#141414;font-family:'Liberation Sans',sans-serif;-webkit-text-stroke:0.25px #141414;left:600.0px;">5.0</div>
<div class="t" style="top:395.96px;font-size:6.3px;font-weight:bold;color:#141414;font-family:'Liberation Sans',sans-serif;-webkit-text-stroke:0.25px #141414;right:483.5px;text-align:right;"># Slices</div>
<div class="a" style="left:508.5px;top:393px;width:34.5px;height:12px;background:#dfe1ee;border-top:1.5px solid #283167;border-left:1.5px solid #283167;border-right:1px solid #c9cce2;border-bottom:1px solid #c9cce2;"></div>
<div class="t" style="top:396.17px;font-size:6.5px;font-weight:bold;color:#141414;font-family:'Liberation Sans',sans-serif;-webkit-text-stroke:0.25px #141414;left:511.0px;">3</div>
<div class="a" style="left:553px;top:393px;width:35px;height:12px;background:#dfe1ee;border-top:1.5px solid #283167;border-left:1.5px solid #283167;border-right:1px solid #c9cce2;border-bottom:1px solid #c9cce2;"></div>
<div class="t" style="top:396.17px;font-size:6.5px;font-weight:bold;color:#141414;font-family:'Liberation Sans',sans-serif;-webkit-text-stroke:0.25px #141414;left:555.5px;">3</div>
<div class="a" style="left:597.5px;top:393px;width:36.0px;height:12px;background:#dfe1ee;border-top:1.5px solid #283167;border-left:1.5px solid #283167;border-right:1px solid #c9cce2;border-bottom:1px solid #c9cce2;"></div>
<div class="t" style="top:396.17px;font-size:6.5px;font-weight:bold;color:#141414;font-family:'Liberation Sans',sans-serif;-webkit-text-stroke:0.25px #141414;left:600.0px;">1</div>
<div class="a" style="left:131px;top:433px;width:526px;height:1.3000000000000114px;background:#3c4574"></div>
<div class="a" style="left:132px;top:434.3px;width:524px;height:0.6999999999999886px;background:#66709e"></div>
<div class="a" style="left:136px;top:446.5px;width:49.5px;height:16.0px;background:#7883b7;border-top:1px solid #b4bbdd;border-left:1px solid #b4bbdd;border-right:1px solid #2f3868;border-bottom:1px solid #2f3868;"></div>
<div class="t" style="top:451.42px;font-size:6.6px;font-weight:bold;color:#141414;font-family:'Liberation Sans',sans-serif;-webkit-text-stroke:0.25px #141414;left:10.800000000000011px;width:300px;text-align:center;">Save Series</div>
<div class="t" style="top:437.42px;font-size:6.4px;font-weight:bold;color:#141414;font-family:'Liberation Sans',sans-serif;-webkit-text-stroke:0.25px #141414;left:194.2px;">Rx Scan Time: 0:09</div>
<div class="t" style="top:456.12px;font-size:6.4px;font-weight:bold;color:#141414;font-family:'Liberation Sans',sans-serif;-webkit-text-stroke:0.25px #141414;left:205px;"># of Acqs.: 7</div>
<div class="t" style="top:437.42px;font-size:6.4px;font-weight:bold;color:#141414;font-family:'Liberation Sans',sans-serif;-webkit-text-stroke:0.25px #141414;left:289.6px;">Max # of Slices: 1</div>
<div class="t" style="top:456.12px;font-size:6.4px;font-weight:bold;color:#141414;font-family:'Liberation Sans',sans-serif;-webkit-text-stroke:0.25px #141414;left:295.7px;">Total # Slices: 7</div>
<div class="a" style="left:358.2px;top:435.4px;width:12.199999999999989px;height:12.100000000000023px;background:#8891c3;border-top:1px solid #c9cee9;border-left:1px solid #c9cee9;border-right:1px solid #2f3868;border-bottom:1px solid #2f3868;"></div>
<svg class="a" style="left:361.29999999999995px;top:437.45px" width="6" height="8"><path d="M1.2 0.8 L4.6 4 L1.2 7.2" fill="none" stroke="#c4c2b4" stroke-width="1.1"/></svg>
<div class="t" style="top:437.42px;font-size:6.4px;font-weight:bold;color:#141414;font-family:'Liberation Sans',sans-serif;-webkit-text-stroke:0.25px #141414;left:378.4px;">Rel. SNR(%): 100</div>
<div class="t" style="top:446.46px;font-size:6.3px;font-weight:bold;color:#20264c;font-family:'Liberation Sans',sans-serif;left:385.4px;text-shadow:-0.5px -0.5px 0 rgba(190,196,225,0.25);-webkit-text-stroke:0.2px #20264c">iDrive FPS: &lt;1</div>
<div class="t" style="top:437.12px;font-size:6.4px;font-weight:bold;color:#141414;font-family:'Liberation Sans',sans-serif;-webkit-text-stroke:0.25px #141414;left:471.2px;">Est. SAR: 0.0</div>
<div class="t" style="top:446.22px;font-size:6.4px;font-weight:bold;color:#141414;font-family:'Liberation Sans',sans-serif;-webkit-text-stroke:0.25px #141414;left:468.8px;">Peak SAR: 0.1</div>
<div class="t" style="top:436.92px;font-size:6.4px;font-weight:bold;color:#141414;font-family:'Liberation Sans',sans-serif;-webkit-text-stroke:0.25px #141414;right:386.5px;text-align:right;">dBAR: First Level</div>
<div class="t" style="top:446.42px;font-size:6.4px;font-weight:bold;color:#141414;font-family:'Liberation Sans',sans-serif;-webkit-text-stroke:0.25px #141414;right:386.5px;text-align:right;">SAR: First Level</div>
<div class="a" style="left:601.5px;top:446.5px;width:50.0px;height:16.5px;background:#7883b7;border-top:1px solid #b4bbdd;border-left:1px solid #b4bbdd;border-right:1px solid #2f3868;border-bottom:1px solid #2f3868;"></div>
<div class="t" style="top:451.62px;font-size:6.6px;font-weight:bold;color:#141414;font-family:'Liberation Sans',sans-serif;-webkit-text-stroke:0.25px #141414;left:476.5px;width:300px;text-align:center;">Reset Values</div>
<div class="a" style="left:131px;top:464.5px;width:525px;height:13.5px;background:#5d6795;border-top:1.5px solid #a8b0d8;border-bottom:1.5px solid #272f5c;border-right:1.5px solid #272f5c;border-left:1px solid #a8b0d8"></div>
<div class="t" style="top:15.17px;font-size:9.6px;font-weight:normal;color:#f2f3f8;font-family:'Liberation Sans',sans-serif;left:671px;">Scan time</div>
<div class="t" style="top:11.85px;font-size:16.5px;font-weight:bold;color:#f4f5fa;font-family:'Liberation Sans',sans-serif;left:743px;">00:00</div>
<div class="t" style="top:43.70px;font-size:8.5px;font-weight:bold;color:#141414;font-family:'Liberation Sans',sans-serif;-webkit-text-stroke:0.25px #141414;left:671px;width:300px;text-align:center;">Autoview</div>
<svg class="a" style="left:669.5px;top:53.8px" width="289" height="288.5">
<defs>
<filter id="nz" x="0" y="0" width="100%" height="100%">
<feTurbulence type="fractalNoise" baseFrequency="0.7" numOctaves="1" seed="5"/>
<feColorMatrix type="matrix" values="0 0 0 0 1  0 0 0 0 1  0 0 0 0 1  1.6 0 0 0 -0.75"/>
</filter>
<filter id="nz2" x="0" y="0" width="100%" height="100%">
<feTurbulence type="fractalNoise" baseFrequency="0.2" numOctaves="2" seed="11"/>
<feColorMatrix type="matrix" values="0 0 0 0 0  0 0 0 0 0  0 0 0 0 0  2.0 0 0 0 -0.8"/>
<feGaussianBlur stdDeviation="0.9"/>
</filter>
<clipPath id="bc"><path d="M81 200 C80 186 90 174 104 166 C116 159 132 155.5 146 156 C160 156.5 176 161 188 168 C198 175 203 186 201 198 C199 210 190 217 176 220 C164 223 154 224 146 224.5 C134 225 124 224 114 221 C100 218 90 214 84 208 C82 206 81 203 81 200 Z"/></clipPath>
<filter id="bl" x="-20%" y="-20%" width="140%" height="140%"><feGaussianBlur stdDeviation="2.2"/></filter>
<filter id="bl1" x="-20%" y="-20%" width="140%" height="140%"><feGaussianBlur stdDeviation="1.2"/></filter>
<filter id="bl2" x="-50%" y="-50%" width="200%" height="200%"><feGaussianBlur stdDeviation="5"/></filter>
</defs>
<rect x="0.5" y="0.5" width="288" height="287.5" fill="#040404" stroke="#a8a43a" stroke-width="1.2"/>
<g filter="url(#bl2)"><path d="M136 35 Q132 60 134 95" stroke="#2c2c2c" stroke-width="4" fill="none"/><path d="M145 45 Q148 70 144 100" stroke="#303030" stroke-width="4" fill="none"/><ellipse cx="142" cy="99" rx="3" ry="4" fill="#333"/><path d="M128 60 L126 90" stroke="#1a1a1a" stroke-width="3"/></g>
<g filter="url(#bl)">
<path d="M81 200 C80 186 90 174 104 166 C116 159 132 155.5 146 156 C160 156.5 176 161 188 168 C198 175 203 186 201 198 C199 210 190 217 176 220 C164 223 154 224 146 224.5 C134 225 124 224 114 221 C100 218 90 214 84 208 C82 206 81 203 81 200 Z" fill="#888888"/>
<ellipse cx="125" cy="198" rx="10" ry="11" fill="#4a4a4a"/>
<ellipse cx="161" cy="196" rx="9" ry="10" fill="#555"/>
<ellipse cx="141" cy="181" rx="9" ry="5" fill="#303030"/>
<ellipse cx="141" cy="199" rx="4" ry="12" fill="#6a6a6a"/>
<ellipse cx="133" cy="222" rx="8" ry="4" fill="#222"/>
</g>
<g clip-path="url(#bc)"><rect x="70" y="140" width="140" height="95" filter="url(#nz2)" opacity="0.45"/></g>
<g filter="url(#bl1)">
<path d="M150 220 L178 219.5 L176 222.5 L150 223 Z" fill="#c8c8c8"/>
</g><g filter="url(#bl)">
<path d="M169 112 L180 120 L187 114 L192 121 L203 118 L197 127 L209 134 L196 137 L190 140 L178 139 L166 150 L172 136 L168 124 Z" fill="#9c9c9c"/>
</g><g filter="url(#bl1)">
<path d="M176 134 Q188 130 201 132 L196 137 L178 138 Z" fill="#f6f6f6"/>
<ellipse cx="186" cy="129" rx="8" ry="5" fill="#bdbdbd"/>
<path d="M98 143 Q105 136 114 144 L116 149 L106 145 Z" fill="#9a9a9a"/>
</g>
<rect x="1" y="1" width="287" height="286.5" filter="url(#nz)" opacity="0.16"/>
</svg>
<div class="t" style="top:55.87px;font-size:6.5px;font-weight:normal;color:#e0e0e0;font-family:'Liberation Mono',monospace;left:673px;letter-spacing:-0.35px">Ex: 1062</div>
<div class="t" style="top:62.97px;font-size:6.5px;font-weight:normal;color:#e0e0e0;font-family:'Liberation Mono',monospace;left:673px;letter-spacing:-0.35px">Se: 7</div>
<div class="t" style="top:70.07px;font-size:6.5px;font-weight:normal;color:#e0e0e0;font-family:'Liberation Mono',monospace;left:673px;letter-spacing:-0.35px">Im: 4</div>
<div class="t" style="top:77.17px;font-size:6.5px;font-weight:normal;color:#e0e0e0;font-family:'Liberation Mono',monospace;left:673px;letter-spacing:-0.35px">CMB OAx I48.1</div>
<div class="t" style="top:55.87px;font-size:6.5px;font-weight:normal;color:#e0e0e0;font-family:'Liberation Mono',monospace;right:32px;text-align:right;letter-spacing:-0.35px">LI HUAN</div>
<div class="t" style="top:300.32px;font-size:6.6px;font-weight:normal;color:#d8d8d8;font-family:'Liberation Mono',monospace;left:673px;letter-spacing:-0.3px">SE/EPI</div>
<div class="t" style="top:307.22px;font-size:6.6px;font-weight:normal;color:#d8d8d8;font-family:'Liberation Mono',monospace;left:673px;letter-spacing:-0.3px">TR:10000</div>
<div class="t" style="top:314.12px;font-size:6.6px;font-weight:normal;color:#d8d8d8;font-family:'Liberation Mono',monospace;left:673px;letter-spacing:-0.3px">TE:121/FE</div>
<div class="t" style="top:321.02px;font-size:6.6px;font-weight:normal;color:#d8d8d8;font-family:'Liberation Mono',monospace;left:673px;letter-spacing:-0.3px">EC:1/1 167kHz</div>
<div class="t" style="top:334.12px;font-size:6.6px;font-weight:normal;color:#d8d8d8;font-family:'Liberation Mono',monospace;left:673px;letter-spacing:-0.3px">FOV:24x24</div>
<div class="t" style="top:334.12px;font-size:6.6px;font-weight:normal;color:#d8d8d8;font-family:'Liberation Mono',monospace;right:31.5px;text-align:right;letter-spacing:-0.3px">W =&nbsp;&nbsp;&nbsp;220 L =&nbsp;&nbsp;&nbsp;&nbsp;117</div>
<div class="a" style="left:958px;top:54px;width:10px;height:287.5px;background:#56618f;border-right:1.5px solid #b9c0e2"></div>
<svg class="a" style="left:958px;top:54px" width="10" height="11"><path d="M1.5 10 L5 1.5 L8.5 10 Z" fill="#a8b0d8" stroke="#dfe2f2" stroke-width="0.8"/></svg>
<svg class="a" style="left:958px;top:331px" width="10" height="11"><path d="M1.5 1.5 L5 10 L8.5 1.5 Z" fill="#a8b0d8" stroke="#dfe2f2" stroke-width="0.8"/></svg>
<div class="a" style="left:958.5px;top:278px;width:8.0px;height:1.5px;background:#dfe2f2"></div>
<div class="a" style="left:674px;top:351.5px;width:8.5px;height:8.5px;background:#5c6694;border-top:1px solid #a9b1d8;border-left:1px solid #a9b1d8;border-right:1px solid #2c3564;border-bottom:1px solid #2c3564;"></div>
<div class="t" style="top:352.76px;font-size:6.3px;font-weight:bold;color:#141414;font-family:'Liberation Sans',sans-serif;-webkit-text-stroke:0.25px #141414;left:686px;">Autoview</div>
<div class="a" style="left:754px;top:352.5px;width:8.5px;height:8.5px;background:#5c6694;border-top:1px solid #a9b1d8;border-left:1px solid #a9b1d8;border-right:1px solid #2c3564;border-bottom:1px solid #2c3564;"></div>
<div class="t" style="top:353.84px;font-size:6.15px;font-weight:bold;color:#141414;font-family:'Liberation Sans',sans-serif;-webkit-text-stroke:0.25px #141414;left:766px;">ReportCursor</div>
<div class="a" style="left:836px;top:351.5px;width:8.5px;height:8.5px;background:#5c6694;border-top:1px solid #a9b1d8;border-left:1px solid #a9b1d8;border-right:1px solid #2c3564;border-bottom:1px solid #2c3564;"></div>
<div class="t" style="top:352.81px;font-size:6.2px;font-weight:bold;color:#141414;font-family:'Liberation Sans',sans-serif;-webkit-text-stroke:0.25px #141414;left:847.5px;">Auto W/L</div>
<div class="a" style="left:911.2px;top:346.8px;width:56.39999999999998px;height:17.899999999999977px;background:#7883b7;border-top:1px solid #b4bbdd;border-left:1px solid #b4bbdd;border-right:1px solid #2f3868;border-bottom:1px solid #2f3868;"></div>
<div class="t" style="top:352.63px;font-size:7px;font-weight:bold;color:#141414;font-family:'Liberation Sans',sans-serif;-webkit-text-stroke:0.25px #141414;left:789.4px;width:300px;text-align:center;">Update</div>
<div class="a" style="left:679px;top:464.5px;width:65px;height:41.5px;background:#1f2858;border:1px solid #8a93c0"></div>
<div class="a" style="left:681.5px;top:468px;width:60.0px;height:8.5px;background:#243062"></div>
<div class="a" style="left:681.5px;top:468px;width:8.5px;height:8.5px;background:#2b366a;border-right:1px solid #8a93c0"></div>
<div class="a" style="left:683px;top:471.5px;width:5px;height:1.0px;background:#8a93c0"></div>
<div class="t" style="top:469.32px;font-size:6.6px;font-weight:bold;color:#f0f0f8;font-family:'Liberation Sans',sans-serif;left:566px;width:300px;text-align:center;">Acquire</div>
<div class="a" style="left:681.5px;top:477px;width:59.5px;height:26px;background:#dcdcdc"></div>
<div class="t" style="top:479.16px;font-size:9px;font-weight:bold;color:#111;font-family:'Liberation Sans',sans-serif;-webkit-text-stroke:0.25px #141414;left:686px;">&#8249;</div>
<div class="a" style="left:692px;top:483.3px;width:46px;height:0.5999999999999659px;background:repeating-linear-gradient(90deg,#c0c0c0 0 3px,transparent 3px 5px)"></div>
<div class="t" style="top:492.02px;font-size:6.6px;font-weight:normal;color:#222;font-family:'Liberation Sans',sans-serif;left:686px;"><u>S</u>creen Shot...</div>
<div class="a" style="left:131.6px;top:527.5px;width:522.4px;height:89.5px;background:#1f2858"></div>
<div class="a" style="left:131.6px;top:527.5px;width:521.9px;height:12.0px;background:#222b5a;border-left:1px solid #8a93c0"></div>
<div class="t" style="top:529.87px;font-size:6.5px;font-weight:bold;color:#eef0f8;font-family:'Liberation Sans',sans-serif;left:136.5px;">Notes - 3-pl Loc</div>
<div class="a" style="left:625px;top:527.5px;width:12px;height:11.5px;background:#7781b4;border-top:1px solid #a9b0d6;border-left:1px solid #a9b0d6;border-right:1px solid #2e3666;border-bottom:1px solid #2e3666;"></div>
<div class="a" style="left:638px;top:527.5px;width:12.5px;height:11.5px;background:#7781b4;border-top:1px solid #a9b0d6;border-left:1px solid #a9b0d6;border-right:1px solid #2e3666;border-bottom:1px solid #2e3666;"></div>
<div class="a" style="left:630px;top:532.8px;width:2px;height:0.8000000000000682px;background:#3a4270"></div>
<div class="a" style="left:642.7px;top:531.8px;width:2.599999999999909px;height:2.6000000000000227px;background:#111;border-radius:50%"></div>
<div class="a" style="left:133px;top:542px;width:509px;height:69.5px;background:#dfe1ee;border-left:1px solid #8a8fa8;border-bottom:1.2px solid #eceef6"></div>
<div class="a" style="left:645.5px;top:542px;width:7.0px;height:69px;background:#5f6998;border:1px solid #9aa2ce"></div>
<div class="a" style="left:646.5px;top:549px;width:5.0px;height:55px;background:#7580b3"></div>
<svg class="a" style="left:645.5px;top:542px" width="7" height="69"><path d="M1.5 6.5 L3.5 1.5 L5.5 6.5 Z" fill="#b8bfe2" stroke="#2e3666" stroke-width="0.5"/><path d="M1.5 62.5 L3.5 67.5 L5.5 62.5 Z" fill="#b8bfe2" stroke="#2e3666" stroke-width="0.5"/></svg>
</body></html>
